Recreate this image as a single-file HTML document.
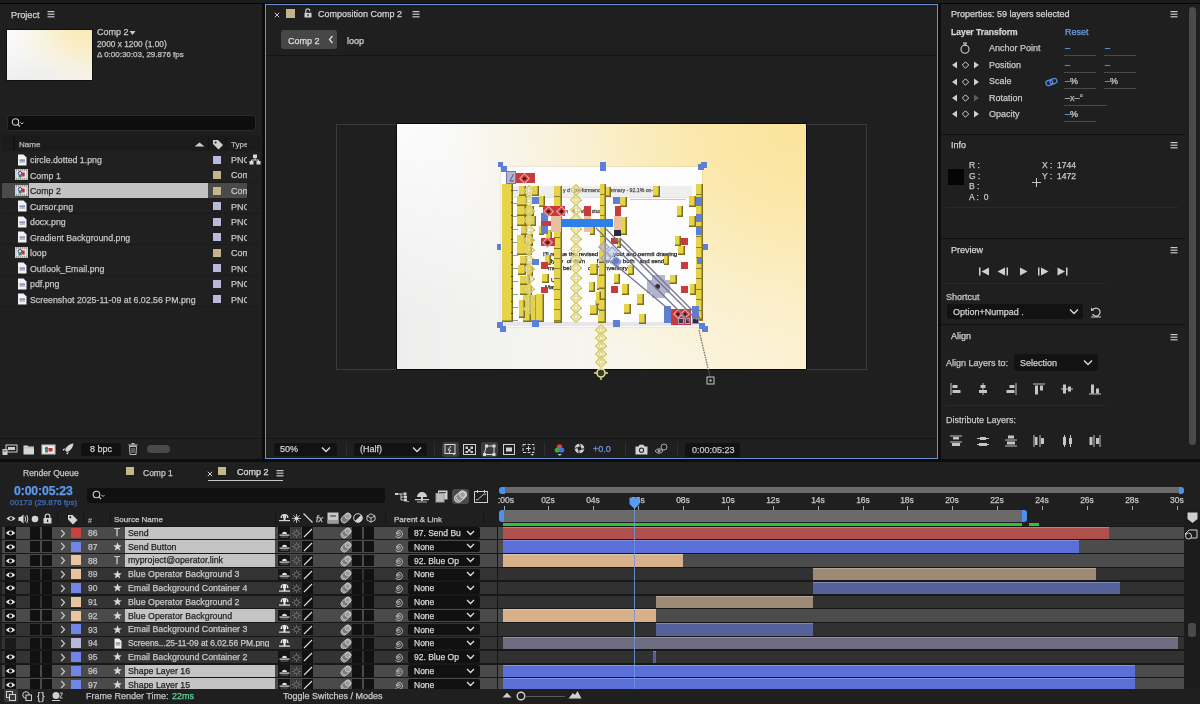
<!DOCTYPE html>
<html><head><meta charset="utf-8">
<style>
*{margin:0;padding:0;box-sizing:border-box}
html,body{width:1200px;height:704px;overflow:hidden;-webkit-font-smoothing:antialiased;background:#0c0c0c;font-family:"Liberation Sans",sans-serif;color:#c4c4c4;font-size:9px}
.a{position:absolute;display:block}
.t{position:absolute;white-space:nowrap;line-height:1;-webkit-text-stroke:0.25px currentColor;will-change:transform}
</style></head><body>

<div class="a" style="left:0px;top:0px;width:1200px;height:2.5px;background:#1b1b1b;"></div>
<div class="a" style="left:0px;top:2.5px;width:1200px;height:1.5px;background:#060606;"></div>
<div class="a" style="left:0px;top:4px;width:262px;height:455px;background:#1f1f1f;"></div>
<div class="t" style="left:11px;top:10.71px;font-size:9.2px;color:#d2d2d2;font-weight:normal;">Project</div>
<svg class="a" style="left:47px;top:11px;" width="8" height="7" viewBox="0 0 8 7"><rect x="0.5" y="0" width="7" height="1.2" fill="#c8c8c8"/><rect x="0.5" y="2.6" width="7" height="1.2" fill="#c8c8c8"/><rect x="0.5" y="5.2" width="7" height="1.2" fill="#c8c8c8"/></svg>
<div class="a" style="left:6px;top:29px;width:87px;height:52px;background:#111;"></div>
<div class="a" style="left:7px;top:30px;width:85px;height:50px;background:radial-gradient(ellipse 100% 120% at 100% 0%, #f8e9b4 0%, #f9eec8 35%, rgba(250,242,215,0.7) 60%, rgba(250,245,235,0) 92%), linear-gradient(165deg,#fbfbfb 0%,#f4f4f4 45%,#eeeeee 75%,#f5f3ee 100%);"></div>
<div class="t" style="left:97px;top:28.18px;font-size:9px;color:#c8c8c8;font-weight:normal;">Comp 2</div>
<svg class="a" style="left:129px;top:30px;" width="7" height="6" viewBox="0 0 7 6"><path d="M0.5 1 L6.5 1 L3.5 5 Z" fill="#c8c8c8"/></svg>
<div class="t" style="left:97px;top:39.67px;font-size:8.3px;color:#c4c4c4;font-weight:normal;">2000 x 1200 (1.00)</div>
<div class="t" style="left:97px;top:50.73px;font-size:8px;color:#c4c4c4;font-weight:normal;">&#916; 0:00:30:03, 29.876 fps</div>
<div class="a" style="left:7px;top:114.5px;width:249px;height:16px;background:#0e0e0e;border-radius:3px;border:1px solid #2a2a2a"></div>
<svg class="a" style="left:11px;top:118px;" width="16" height="10" viewBox="0 0 16 10"><circle cx="4.5" cy="4" r="3.2" fill="none" stroke="#cfcfcf" stroke-width="1.1"/><path d="M6.8 6.3 L9 8.6" stroke="#cfcfcf" stroke-width="1.2"/><path d="M9.5 4.5 L11 6 L12.5 4.5" fill="none" stroke="#cfcfcf" stroke-width="0.9"/></svg>
<div class="a" style="left:2px;top:135px;width:259px;height:16px;background:#1b1b1b;"></div>
<div class="a" style="left:13px;top:137px;width:2px;height:13px;background:#111;"></div>
<div class="t" style="left:19px;top:140.93px;font-size:8px;color:#b8b8b8;font-weight:normal;">Name</div>
<svg class="a" style="left:194px;top:142px;" width="12" height="5" viewBox="0 0 12 5"><path d="M0.5 4.5 L5.5 0.5 L10.5 4.5 Z" fill="#cfcfcf"/></svg>
<div class="a" style="left:208px;top:137px;width:1px;height:13px;background:#131313;"></div>
<svg class="a" style="left:212px;top:139px;" width="12" height="12" viewBox="0 0 12 12"><path d="M1 1 L6 1 L11 6 L6.5 10.5 L1 5 Z" fill="#d0d0d0"/><circle cx="3.6" cy="3.6" r="1" fill="#1b1b1b"/></svg>
<div class="a" style="left:225px;top:137px;width:1px;height:13px;background:#131313;"></div>
<div class="t" style="left:231px;top:140.93px;font-size:8px;color:#b8b8b8;font-weight:normal;width:16px;overflow:hidden">Type</div>
<div class="a" style="left:2px;top:152px;width:259px;height:15px;background:#202020;"></div>
<div class="a" style="left:2px;top:167px;width:259px;height:1px;background:#1a1a1a;"></div>
<svg class="a" style="left:17px;top:154px;" width="10" height="12" viewBox="0 0 10 12"><path d="M1 0.5 L6.5 0.5 L9.5 3.5 L9.5 11.5 L1 11.5 Z" fill="#f2f2f2"/><rect x="2.5" y="5.5" width="5.5" height="1.2" fill="#5b6eb0"/><rect x="2.5" y="7.5" width="5.5" height="1" fill="#8a8a8a"/></svg>
<div class="t" style="left:30px;top:156.05px;font-size:8.8px;color:#c4c4c4;font-weight:normal;">circle.dotted 1.png</div>
<div class="a" style="left:213px;top:156px;width:8px;height:8px;background:#b9b9dc;"></div>
<div class="t" style="left:231px;top:155.88px;font-size:9px;color:#c4c4c4;font-weight:normal;width:16px;overflow:hidden">PNG</div>
<div class="a" style="left:2px;top:167px;width:259px;height:15px;background:#202020;"></div>
<div class="a" style="left:2px;top:182px;width:259px;height:1px;background:#1a1a1a;"></div>
<svg class="a" style="left:15px;top:169px;" width="13" height="11" viewBox="0 0 13 11"><rect x="0" y="0" width="13" height="11" fill="#cfcfcf"/><path d="M1 1 H12 M1 10 H12" stroke="#555" stroke-width="0.8" stroke-dasharray="1 1"/><rect x="2" y="2" width="9" height="7" fill="#e8e8e8"/><circle cx="5" cy="4.3" r="1.8" fill="none" stroke="#2a4a8a" stroke-width="1"/><rect x="6.5" y="3.5" width="3.2" height="4" fill="#b03a3a"/><rect x="3.5" y="6" width="3" height="2.5" fill="#2a8a7a"/></svg>
<div class="t" style="left:30px;top:171.60px;font-size:8.8px;color:#c4c4c4;font-weight:normal;">Comp 1</div>
<div class="a" style="left:213px;top:171px;width:8px;height:8px;background:#c4b48c;"></div>
<div class="t" style="left:231px;top:171.43px;font-size:9px;color:#c4c4c4;font-weight:normal;width:16px;overflow:hidden">Com</div>
<div class="a" style="left:2px;top:183px;width:259px;height:15px;background:#202020;"></div>
<div class="a" style="left:2px;top:198px;width:259px;height:1px;background:#1a1a1a;"></div>
<div class="a" style="left:2px;top:183px;width:27px;height:15px;background:#4a4a4a;"></div>
<div class="a" style="left:29px;top:183px;width:179px;height:15px;background:#c2c2c2;"></div>
<div class="a" style="left:208px;top:183px;width:39px;height:15px;background:#4a4a4a;"></div>
<svg class="a" style="left:15px;top:185px;" width="13" height="11" viewBox="0 0 13 11"><rect x="0" y="0" width="13" height="11" fill="#cfcfcf"/><path d="M1 1 H12 M1 10 H12" stroke="#555" stroke-width="0.8" stroke-dasharray="1 1"/><rect x="2" y="2" width="9" height="7" fill="#e8e8e8"/><circle cx="5" cy="4.3" r="1.8" fill="none" stroke="#2a4a8a" stroke-width="1"/><rect x="6.5" y="3.5" width="3.2" height="4" fill="#b03a3a"/><rect x="3.5" y="6" width="3" height="2.5" fill="#2a8a7a"/></svg>
<div class="t" style="left:30px;top:187.15px;font-size:8.8px;color:#262626;font-weight:normal;">Comp 2</div>
<div class="a" style="left:213px;top:187px;width:8px;height:8px;background:#c4b48c;"></div>
<div class="t" style="left:231px;top:186.98px;font-size:9px;color:#c4c4c4;font-weight:normal;width:16px;overflow:hidden">Com</div>
<div class="a" style="left:2px;top:198px;width:259px;height:15px;background:#202020;"></div>
<div class="a" style="left:2px;top:213px;width:259px;height:1px;background:#1a1a1a;"></div>
<svg class="a" style="left:17px;top:200px;" width="10" height="12" viewBox="0 0 10 12"><path d="M1 0.5 L6.5 0.5 L9.5 3.5 L9.5 11.5 L1 11.5 Z" fill="#f2f2f2"/><rect x="2.5" y="5.5" width="5.5" height="1.2" fill="#5b6eb0"/><rect x="2.5" y="7.5" width="5.5" height="1" fill="#8a8a8a"/></svg>
<div class="t" style="left:30px;top:202.70px;font-size:8.8px;color:#c4c4c4;font-weight:normal;">Cursor.png</div>
<div class="a" style="left:213px;top:202px;width:8px;height:8px;background:#b9b9dc;"></div>
<div class="t" style="left:231px;top:202.53px;font-size:9px;color:#c4c4c4;font-weight:normal;width:16px;overflow:hidden">PNG</div>
<div class="a" style="left:2px;top:214px;width:259px;height:15px;background:#202020;"></div>
<div class="a" style="left:2px;top:229px;width:259px;height:1px;background:#1a1a1a;"></div>
<svg class="a" style="left:17px;top:216px;" width="10" height="12" viewBox="0 0 10 12"><path d="M1 0.5 L6.5 0.5 L9.5 3.5 L9.5 11.5 L1 11.5 Z" fill="#f2f2f2"/><rect x="2.5" y="5.5" width="5.5" height="1.2" fill="#5b6eb0"/><rect x="2.5" y="7.5" width="5.5" height="1" fill="#8a8a8a"/></svg>
<div class="t" style="left:30px;top:218.25px;font-size:8.8px;color:#c4c4c4;font-weight:normal;">docx.png</div>
<div class="a" style="left:213px;top:218px;width:8px;height:8px;background:#b9b9dc;"></div>
<div class="t" style="left:231px;top:218.08px;font-size:9px;color:#c4c4c4;font-weight:normal;width:16px;overflow:hidden">PNG</div>
<div class="a" style="left:2px;top:229px;width:259px;height:15px;background:#202020;"></div>
<div class="a" style="left:2px;top:244px;width:259px;height:1px;background:#1a1a1a;"></div>
<svg class="a" style="left:17px;top:231px;" width="10" height="12" viewBox="0 0 10 12"><path d="M1 0.5 L6.5 0.5 L9.5 3.5 L9.5 11.5 L1 11.5 Z" fill="#f2f2f2"/><rect x="2.5" y="5.5" width="5.5" height="1.2" fill="#5b6eb0"/><rect x="2.5" y="7.5" width="5.5" height="1" fill="#8a8a8a"/></svg>
<div class="t" style="left:30px;top:233.80px;font-size:8.8px;color:#c4c4c4;font-weight:normal;">Gradient Background.png</div>
<div class="a" style="left:213px;top:233px;width:8px;height:8px;background:#b9b9dc;"></div>
<div class="t" style="left:231px;top:233.63px;font-size:9px;color:#c4c4c4;font-weight:normal;width:16px;overflow:hidden">PNG</div>
<div class="a" style="left:2px;top:245px;width:259px;height:15px;background:#202020;"></div>
<div class="a" style="left:2px;top:260px;width:259px;height:1px;background:#1a1a1a;"></div>
<svg class="a" style="left:15px;top:247px;" width="13" height="11" viewBox="0 0 13 11"><rect x="0" y="0" width="13" height="11" fill="#cfcfcf"/><path d="M1 1 H12 M1 10 H12" stroke="#555" stroke-width="0.8" stroke-dasharray="1 1"/><rect x="2" y="2" width="9" height="7" fill="#e8e8e8"/><circle cx="5" cy="4.3" r="1.8" fill="none" stroke="#2a4a8a" stroke-width="1"/><rect x="6.5" y="3.5" width="3.2" height="4" fill="#b03a3a"/><rect x="3.5" y="6" width="3" height="2.5" fill="#2a8a7a"/></svg>
<div class="t" style="left:30px;top:249.35px;font-size:8.8px;color:#c4c4c4;font-weight:normal;">loop</div>
<div class="a" style="left:213px;top:249px;width:8px;height:8px;background:#c4b48c;"></div>
<div class="t" style="left:231px;top:249.18px;font-size:9px;color:#c4c4c4;font-weight:normal;width:16px;overflow:hidden">Com</div>
<div class="a" style="left:2px;top:260px;width:259px;height:15px;background:#202020;"></div>
<div class="a" style="left:2px;top:275px;width:259px;height:1px;background:#1a1a1a;"></div>
<svg class="a" style="left:17px;top:262px;" width="10" height="12" viewBox="0 0 10 12"><path d="M1 0.5 L6.5 0.5 L9.5 3.5 L9.5 11.5 L1 11.5 Z" fill="#f2f2f2"/><rect x="2.5" y="5.5" width="5.5" height="1.2" fill="#5b6eb0"/><rect x="2.5" y="7.5" width="5.5" height="1" fill="#8a8a8a"/></svg>
<div class="t" style="left:30px;top:264.90px;font-size:8.8px;color:#c4c4c4;font-weight:normal;">Outlook_Email.png</div>
<div class="a" style="left:213px;top:264px;width:8px;height:8px;background:#b9b9dc;"></div>
<div class="t" style="left:231px;top:264.73px;font-size:9px;color:#c4c4c4;font-weight:normal;width:16px;overflow:hidden">PNG</div>
<div class="a" style="left:2px;top:276px;width:259px;height:15px;background:#202020;"></div>
<div class="a" style="left:2px;top:291px;width:259px;height:1px;background:#1a1a1a;"></div>
<svg class="a" style="left:17px;top:278px;" width="10" height="12" viewBox="0 0 10 12"><path d="M1 0.5 L6.5 0.5 L9.5 3.5 L9.5 11.5 L1 11.5 Z" fill="#f2f2f2"/><rect x="2.5" y="5.5" width="5.5" height="1.2" fill="#5b6eb0"/><rect x="2.5" y="7.5" width="5.5" height="1" fill="#8a8a8a"/></svg>
<div class="t" style="left:30px;top:280.45px;font-size:8.8px;color:#c4c4c4;font-weight:normal;">pdf.png</div>
<div class="a" style="left:213px;top:280px;width:8px;height:8px;background:#b9b9dc;"></div>
<div class="t" style="left:231px;top:280.28px;font-size:9px;color:#c4c4c4;font-weight:normal;width:16px;overflow:hidden">PNG</div>
<div class="a" style="left:2px;top:291px;width:259px;height:15px;background:#202020;"></div>
<div class="a" style="left:2px;top:306px;width:259px;height:1px;background:#1a1a1a;"></div>
<svg class="a" style="left:17px;top:293px;" width="10" height="12" viewBox="0 0 10 12"><path d="M1 0.5 L6.5 0.5 L9.5 3.5 L9.5 11.5 L1 11.5 Z" fill="#f2f2f2"/><rect x="2.5" y="5.5" width="5.5" height="1.2" fill="#5b6eb0"/><rect x="2.5" y="7.5" width="5.5" height="1" fill="#8a8a8a"/></svg>
<div class="t" style="left:30px;top:296.00px;font-size:8.8px;color:#c4c4c4;font-weight:normal;">Screenshot 2025-11-09 at 6.02.56 PM.png</div>
<div class="a" style="left:213px;top:295px;width:8px;height:8px;background:#b9b9dc;"></div>
<div class="t" style="left:231px;top:295.83px;font-size:9px;color:#c4c4c4;font-weight:normal;width:16px;overflow:hidden">PNG</div>
<svg class="a" style="left:249px;top:154px;" width="12" height="11" viewBox="0 0 12 11"><rect x="4" y="0.5" width="4" height="3.5" fill="#d8d8d8"/><path d="M6 4 V6 M2.5 6 H9.5 M2.5 6 V7 M9.5 6 V7" stroke="#d8d8d8" stroke-width="1"/><rect x="0.5" y="7" width="4" height="3.5" fill="#d8d8d8"/><rect x="7.5" y="7" width="4" height="3.5" fill="#d8d8d8"/></svg>
<div class="a" style="left:0px;top:438px;width:262px;height:1px;background:#141414;"></div>
<svg class="a" style="left:2px;top:444px;" width="16" height="12" viewBox="0 0 16 12"><rect x="4" y="1" width="11" height="7" fill="none" stroke="#cfcfcf" stroke-width="1"/><rect x="6" y="3" width="7" height="3" fill="#cfcfcf"/><rect x="0.5" y="5" width="5" height="6" fill="#cfcfcf"/><rect x="1.5" y="6.5" width="3" height="0.8" fill="#1f1f1f"/></svg>
<svg class="a" style="left:23px;top:444px;" width="12" height="11" viewBox="0 0 12 11"><path d="M0.5 1.5 H4.5 L5.5 2.5 H11 V10.5 H0.5 Z" fill="#d6d6d6"/><rect x="0.5" y="3.5" width="10.5" height="0.7" fill="#aaa"/></svg>
<svg class="a" style="left:41px;top:444px;" width="15" height="11" viewBox="0 0 15 11"><rect x="0.5" y="0.5" width="14" height="10" fill="#cfcfcf"/><rect x="2" y="2" width="11" height="7" fill="#eee"/><circle cx="5.5" cy="4.5" r="1.8" fill="#3d6fb0"/><rect x="7.5" y="4" width="4" height="3.5" fill="#c03030"/><rect x="4" y="6" width="3" height="2.5" fill="#3a9a50"/></svg>
<svg class="a" style="left:62px;top:443px;" width="12" height="12" viewBox="0 0 12 12"><path d="M11.5 0.5 C7 1 4 4 3 7 L5 9 C8 8 11 5 11.5 0.5 Z" fill="#d6d6d6"/><path d="M3 5 L0.5 6.5 L2 8 Z M7 9 L5.5 11.5 L4 10 Z" fill="#d6d6d6"/></svg>
<div class="a" style="left:81px;top:443px;width:40px;height:13px;background:#111;border-radius:2px"></div>
<div class="t" style="left:89.5px;top:445.38px;font-size:9px;color:#d0d0d0;font-weight:normal;">8 bpc</div>
<svg class="a" style="left:128px;top:443px;" width="10" height="12" viewBox="0 0 10 12"><rect x="0.5" y="1.5" width="9" height="1.2" fill="#bbb"/><rect x="3.5" y="0" width="3" height="1.5" fill="#bbb"/><path d="M1.5 3.5 H8.5 L8 11.5 H2 Z" fill="none" stroke="#bbb" stroke-width="1"/><path d="M4 5 V10 M6 5 V10" stroke="#bbb" stroke-width="0.8"/></svg>
<div class="a" style="left:147px;top:445px;width:23px;height:8px;background:#4a4a4a;border-radius:4px"></div>
<div class="a" style="left:265px;top:4px;width:673px;height:455px;background:#1f1f1f;"></div>
<div class="a" style="left:265px;top:4px;width:673px;height:455px;border:1px solid #6d8fcf"></div>
<svg class="a" style="left:274px;top:12px;" width="6" height="6" viewBox="0 0 6 6"><path d="M0.8 0.8 L5.2 5.2 M5.2 0.8 L0.8 5.2" stroke="#c4c4c4" stroke-width="1"/></svg>
<div class="a" style="left:286px;top:9px;width:9px;height:9px;background:#c4b48c;"></div>
<svg class="a" style="left:304px;top:8px;" width="8" height="10" viewBox="0 0 8 10"><path d="M1.8 4.8 V2.8 A2 2 0 0 1 5.8 2.8 V3.2" fill="none" stroke="#d0d0d0" stroke-width="1.2"/><rect x="0.5" y="4.8" width="7" height="4.7" fill="#d0d0d0"/><rect x="3.4" y="6" width="1.2" height="2.2" fill="#1f1f1f"/></svg>
<div class="t" style="left:318px;top:10.38px;font-size:9px;color:#d2d2d2;font-weight:normal;">Composition Comp 2</div>
<svg class="a" style="left:412px;top:11px;" width="8" height="7" viewBox="0 0 8 7"><rect x="0.5" y="0" width="7" height="1.2" fill="#c8c8c8"/><rect x="0.5" y="2.6" width="7" height="1.2" fill="#c8c8c8"/><rect x="0.5" y="5.2" width="7" height="1.2" fill="#c8c8c8"/></svg>
<div class="a" style="left:281px;top:30px;width:56px;height:19px;background:#474747;border-radius:3px"></div>
<div class="t" style="left:288px;top:36.88px;font-size:9px;color:#dcdcdc;font-weight:normal;">Comp 2</div>
<svg class="a" style="left:328px;top:35px;" width="6" height="9" viewBox="0 0 6 9"><path d="M4.5 1 L1.5 4.5 L4.5 8" fill="none" stroke="#e0e0e0" stroke-width="1.3"/></svg>
<div class="t" style="left:347px;top:36.88px;font-size:9px;color:#cfcfcf;font-weight:normal;">loop</div>
<div class="a" style="left:266px;top:55px;width:671px;height:1px;background:#141414;"></div>
<div class="a" style="left:336px;top:124px;width:531px;height:245.5px;border:1px solid #3a3a3a"></div>
<div class="a" style="left:396px;top:123px;width:411px;height:247px;background:#0a0a0a"></div>
<div class="a" id="compbg" style="left:397px;top:124px;width:409px;height:245px;background:radial-gradient(ellipse 92% 118% at 100% 0%, rgba(252,227,154,1) 0%, rgba(251,231,168,0.92) 30%, rgba(251,236,190,0.55) 62%, rgba(251,240,210,0) 95%), radial-gradient(ellipse 60% 80% at 0% 0%, rgba(255,255,255,0.8) 0%, rgba(255,255,255,0) 100%), linear-gradient(90deg,#eeeeee 0%,#f3f3f1 30%,#f9f6ea 60%,#fcf3d6 100%);">
<div class="a" style="left:104.0px;top:43.0px;width:201.0px;height:160.0px;background:#fcfcfc;box-shadow:0 0 2px rgba(0,0,0,0.15)"></div><div class="a" style="left:113.0px;top:62.0px;width:182.0px;height:11.0px;background:#eeeeee;"></div><div class="a" style="left:107.0px;top:198.0px;width:196.0px;height:4.0px;background:#e6e6ea;"></div><div class="a" style="left:115.0px;top:73.0px;width:180.0px;height:1.0px;background:#e4e4e4;"></div><div class="t" style="left:166px;top:64px;font-size:5.2px;color:#555">y d&nbsp;&nbsp; performance&nbsp;&nbsp;&nbsp; mmary - 92.1% on-tim</div><div class="t" style="left:165px;top:85px;font-size:5.2px;color:#444">on&nbsp;&nbsp; 4&nbsp;&nbsp;&nbsp; vine stud</div><div class="t" style="left:146px;top:127px;font-size:6px;color:#222">I&#39;ll re&nbsp;&nbsp; ue the revised&nbsp;&nbsp;&nbsp;&nbsp;&nbsp;&nbsp;&nbsp;&nbsp; yout and permit drawing</div><div class="t" style="left:152px;top:134px;font-size:6px;color:#222">dy by&nbsp; of dam&nbsp;&nbsp;&nbsp;&nbsp;&nbsp;&nbsp; I&#39;ll review both&nbsp;&nbsp; and send</div><div class="t" style="left:151px;top:141px;font-size:6px;color:#222">mm&nbsp;&nbsp; bef&nbsp;&nbsp;&nbsp;&nbsp;&nbsp;&nbsp;&nbsp;&nbsp;&nbsp; day&#39;s inventory.</div><div class="t" style="left:154px;top:153px;font-size:6px;color:#222">Up</div><div class="t" style="left:148px;top:160px;font-size:6px;color:#222">May</div><div class="a" style="left:115.0px;top:66.0px;width:6.0px;height:1.0px;background:#9a9a9a;"></div><div class="a" style="left:115.0px;top:79.0px;width:6.0px;height:1.0px;background:#9a9a9a;"></div><div class="a" style="left:115.0px;top:92.0px;width:6.0px;height:1.0px;background:#9a9a9a;"></div><div class="a" style="left:115.0px;top:105.0px;width:6.0px;height:1.0px;background:#9a9a9a;"></div><div class="a" style="left:115.0px;top:118.0px;width:6.0px;height:1.0px;background:#9a9a9a;"></div><div class="a" style="left:115.0px;top:131.0px;width:6.0px;height:1.0px;background:#9a9a9a;"></div><div class="a" style="left:115.0px;top:144.0px;width:6.0px;height:1.0px;background:#9a9a9a;"></div><div class="a" style="left:115.0px;top:157.0px;width:6.0px;height:1.0px;background:#9a9a9a;"></div><div class="a" style="left:115.0px;top:170.0px;width:6.0px;height:1.0px;background:#9a9a9a;"></div><div class="a" style="left:115.0px;top:183.0px;width:6.0px;height:1.0px;background:#9a9a9a;"></div><div class="a" style="left:115.0px;top:196.0px;width:6.0px;height:1.0px;background:#9a9a9a;"></div><div class="a" style="left:233.0px;top:75.0px;width:56.0px;height:0.6px;background:#c8c8c8;"></div><div class="a" style="left:105.0px;top:60.0px;width:10.5px;height:138.0px;background:#e6d348;box-shadow:inset -1.5px -1.5px 0 #7a6f22"></div><div class="a" style="left:113.5px;top:66.0px;width:2.5px;height:1.0px;background:#4a4620;"></div><div class="a" style="left:113.5px;top:78.3px;width:2.5px;height:1.0px;background:#4a4620;"></div><div class="a" style="left:113.5px;top:90.6px;width:2.5px;height:1.0px;background:#4a4620;"></div><div class="a" style="left:113.5px;top:102.9px;width:2.5px;height:1.0px;background:#4a4620;"></div><div class="a" style="left:113.5px;top:115.2px;width:2.5px;height:1.0px;background:#4a4620;"></div><div class="a" style="left:113.5px;top:127.5px;width:2.5px;height:1.0px;background:#4a4620;"></div><div class="a" style="left:113.5px;top:139.8px;width:2.5px;height:1.0px;background:#4a4620;"></div><div class="a" style="left:113.5px;top:152.1px;width:2.5px;height:1.0px;background:#4a4620;"></div><div class="a" style="left:113.5px;top:164.4px;width:2.5px;height:1.0px;background:#4a4620;"></div><div class="a" style="left:113.5px;top:176.7px;width:2.5px;height:1.0px;background:#4a4620;"></div><div class="a" style="left:113.5px;top:189.0px;width:2.5px;height:1.0px;background:#4a4620;"></div><div class="a" style="left:299.0px;top:60.0px;width:6.5px;height:136.0px;background:#e6d348;box-shadow:inset -1.5px -1.5px 0 #7a6f22"></div><div class="a" style="left:157.0px;top:62.0px;width:7.5px;height:137.0px;background:#e6d348;box-shadow:inset -1.5px -1.5px 0 #7a6f22"></div><div class="a" style="left:203.0px;top:60.0px;width:5.5px;height:64.0px;background:#e6d348;box-shadow:inset -1.5px -1.5px 0 #7a6f22"></div><div class="a" style="left:157.0px;top:72.0px;width:7.5px;height:1.0px;background:#8a7e2a;"></div><div class="a" style="left:157.0px;top:82.3px;width:7.5px;height:1.0px;background:#8a7e2a;"></div><div class="a" style="left:157.0px;top:92.6px;width:7.5px;height:1.0px;background:#8a7e2a;"></div><div class="a" style="left:157.0px;top:102.9px;width:7.5px;height:1.0px;background:#8a7e2a;"></div><div class="a" style="left:157.0px;top:113.2px;width:7.5px;height:1.0px;background:#8a7e2a;"></div><div class="a" style="left:157.0px;top:123.5px;width:7.5px;height:1.0px;background:#8a7e2a;"></div><div class="a" style="left:157.0px;top:133.8px;width:7.5px;height:1.0px;background:#8a7e2a;"></div><div class="a" style="left:157.0px;top:144.1px;width:7.5px;height:1.0px;background:#8a7e2a;"></div><div class="a" style="left:157.0px;top:154.4px;width:7.5px;height:1.0px;background:#8a7e2a;"></div><div class="a" style="left:157.0px;top:164.7px;width:7.5px;height:1.0px;background:#8a7e2a;"></div><div class="a" style="left:157.0px;top:175.0px;width:7.5px;height:1.0px;background:#8a7e2a;"></div><div class="a" style="left:157.0px;top:185.3px;width:7.5px;height:1.0px;background:#8a7e2a;"></div><div class="a" style="left:157.0px;top:195.6px;width:7.5px;height:1.0px;background:#8a7e2a;"></div><div class="a" style="left:299.0px;top:70.0px;width:6.5px;height:1.0px;background:#8a7e2a;"></div><div class="a" style="left:299.0px;top:80.5px;width:6.5px;height:1.0px;background:#8a7e2a;"></div><div class="a" style="left:299.0px;top:91.0px;width:6.5px;height:1.0px;background:#8a7e2a;"></div><div class="a" style="left:299.0px;top:101.5px;width:6.5px;height:1.0px;background:#8a7e2a;"></div><div class="a" style="left:299.0px;top:112.0px;width:6.5px;height:1.0px;background:#8a7e2a;"></div><div class="a" style="left:299.0px;top:122.5px;width:6.5px;height:1.0px;background:#8a7e2a;"></div><div class="a" style="left:299.0px;top:133.0px;width:6.5px;height:1.0px;background:#8a7e2a;"></div><div class="a" style="left:299.0px;top:143.5px;width:6.5px;height:1.0px;background:#8a7e2a;"></div><div class="a" style="left:299.0px;top:154.0px;width:6.5px;height:1.0px;background:#8a7e2a;"></div><div class="a" style="left:299.0px;top:164.5px;width:6.5px;height:1.0px;background:#8a7e2a;"></div><div class="a" style="left:299.0px;top:175.0px;width:6.5px;height:1.0px;background:#8a7e2a;"></div><div class="a" style="left:299.0px;top:185.5px;width:6.5px;height:1.0px;background:#8a7e2a;"></div><div class="a" style="left:299.0px;top:196.0px;width:6.5px;height:1.0px;background:#8a7e2a;"></div><div class="a" style="left:203.0px;top:70.0px;width:5.5px;height:1.0px;background:#8a7e2a;"></div><div class="a" style="left:203.0px;top:80.5px;width:5.5px;height:1.0px;background:#8a7e2a;"></div><div class="a" style="left:203.0px;top:91.0px;width:5.5px;height:1.0px;background:#8a7e2a;"></div><div class="a" style="left:203.0px;top:101.5px;width:5.5px;height:1.0px;background:#8a7e2a;"></div><div class="a" style="left:203.0px;top:112.0px;width:5.5px;height:1.0px;background:#8a7e2a;"></div><div class="a" style="left:203.0px;top:122.5px;width:5.5px;height:1.0px;background:#8a7e2a;"></div><div class="a" style="left:121.7px;top:62.0px;width:7.0px;height:10.4px;background:#e6d348;box-shadow:inset -1.5px -1.5px 0 #7a6f22"></div><div class="a" style="left:135.0px;top:62.0px;width:6.5px;height:10.4px;background:#e6d348;box-shadow:inset -1.5px -1.5px 0 #7a6f22"></div><div class="a" style="left:119.7px;top:72.0px;width:10.3px;height:10.0px;background:#e6d348;box-shadow:inset -1.5px -1.5px 0 #7a6f22"></div><div class="a" style="left:119.7px;top:82.0px;width:9.0px;height:9.5px;background:#e6d348;box-shadow:inset -1.5px -1.5px 0 #7a6f22"></div><div class="a" style="left:129.0px;top:82.0px;width:8.0px;height:10.0px;background:#e6d348;box-shadow:inset -1.5px -1.5px 0 #7a6f22"></div><div class="a" style="left:120.4px;top:91.5px;width:8.9px;height:10.3px;background:#e6d348;box-shadow:inset -1.5px -1.5px 0 #7a6f22"></div><div class="a" style="left:129.3px;top:91.5px;width:9.7px;height:10.3px;background:#e6d348;box-shadow:inset -1.5px -1.5px 0 #7a6f22"></div><div class="a" style="left:123.6px;top:101.8px;width:6.4px;height:8.9px;background:#e6d348;box-shadow:inset -1.5px -1.5px 0 #7a6f22"></div><div class="a" style="left:119.7px;top:110.7px;width:9.0px;height:12.8px;background:#e6d348;box-shadow:inset -1.5px -1.5px 0 #7a6f22"></div><div class="a" style="left:130.0px;top:110.0px;width:6.0px;height:12.0px;background:#e6d348;box-shadow:inset -1.5px -1.5px 0 #7a6f22"></div><div class="a" style="left:120.0px;top:119.0px;width:15.0px;height:12.0px;background:#e6d348;box-shadow:inset -1.5px -1.5px 0 #7a6f22"></div><div class="a" style="left:123.0px;top:132.0px;width:7.0px;height:9.0px;background:#e6d348;box-shadow:inset -1.5px -1.5px 0 #7a6f22"></div><div class="a" style="left:121.0px;top:141.0px;width:8.0px;height:10.0px;background:#e6d348;box-shadow:inset -1.5px -1.5px 0 #7a6f22"></div><div class="a" style="left:130.0px;top:142.0px;width:6.0px;height:10.0px;background:#e6d348;box-shadow:inset -1.5px -1.5px 0 #7a6f22"></div><div class="a" style="left:123.0px;top:152.0px;width:10.0px;height:9.0px;background:#e6d348;box-shadow:inset -1.5px -1.5px 0 #7a6f22"></div><div class="a" style="left:123.0px;top:161.0px;width:12.0px;height:10.0px;background:#e6d348;box-shadow:inset -1.5px -1.5px 0 #7a6f22"></div><div class="a" style="left:126.0px;top:171.0px;width:8.0px;height:27.0px;background:#e6d348;box-shadow:inset -1.5px -1.5px 0 #7a6f22"></div><div class="a" style="left:134.0px;top:171.0px;width:6.0px;height:27.0px;background:#e6d348;box-shadow:inset -1.5px -1.5px 0 #7a6f22"></div><div class="a" style="left:139.0px;top:170.0px;width:8.0px;height:28.0px;background:#e6d348;box-shadow:inset -1.5px -1.5px 0 #7a6f22"></div><div class="a" style="left:122.0px;top:176.0px;width:6.0px;height:18.0px;background:#e6d348;box-shadow:inset -1.5px -1.5px 0 #7a6f22"></div><svg class="a" style="left:126.0px;top:61.0px" width="12" height="12" viewBox="0 0 12 12"><path d="M6 0.7 L11.3 6 L6 11.3 L0.7 6 Z" fill="rgba(245,240,200,0.35)" stroke="#d6cc66" stroke-width="1.5"/><circle cx="6" cy="6" r="2.1" fill="none" stroke="#cfc468" stroke-width="0.9"/><path d="M10.5 6.5 H12" stroke="#bdb45a" stroke-width="1"/></svg><svg class="a" style="left:126.0px;top:70.8px" width="12" height="12" viewBox="0 0 12 12"><path d="M6 0.7 L11.3 6 L6 11.3 L0.7 6 Z" fill="rgba(245,240,200,0.35)" stroke="#d6cc66" stroke-width="1.5"/><circle cx="6" cy="6" r="2.1" fill="none" stroke="#cfc468" stroke-width="0.9"/><path d="M10.5 6.5 H12" stroke="#bdb45a" stroke-width="1"/></svg><svg class="a" style="left:126.0px;top:80.6px" width="12" height="12" viewBox="0 0 12 12"><path d="M6 0.7 L11.3 6 L6 11.3 L0.7 6 Z" fill="rgba(245,240,200,0.35)" stroke="#d6cc66" stroke-width="1.5"/><circle cx="6" cy="6" r="2.1" fill="none" stroke="#cfc468" stroke-width="0.9"/><path d="M10.5 6.5 H12" stroke="#bdb45a" stroke-width="1"/></svg><svg class="a" style="left:126.0px;top:90.4px" width="12" height="12" viewBox="0 0 12 12"><path d="M6 0.7 L11.3 6 L6 11.3 L0.7 6 Z" fill="rgba(245,240,200,0.35)" stroke="#d6cc66" stroke-width="1.5"/><circle cx="6" cy="6" r="2.1" fill="none" stroke="#cfc468" stroke-width="0.9"/><path d="M10.5 6.5 H12" stroke="#bdb45a" stroke-width="1"/></svg><svg class="a" style="left:126.0px;top:100.2px" width="12" height="12" viewBox="0 0 12 12"><path d="M6 0.7 L11.3 6 L6 11.3 L0.7 6 Z" fill="rgba(245,240,200,0.35)" stroke="#d6cc66" stroke-width="1.5"/><circle cx="6" cy="6" r="2.1" fill="none" stroke="#cfc468" stroke-width="0.9"/><path d="M10.5 6.5 H12" stroke="#bdb45a" stroke-width="1"/></svg><svg class="a" style="left:126.0px;top:110.0px" width="12" height="12" viewBox="0 0 12 12"><path d="M6 0.7 L11.3 6 L6 11.3 L0.7 6 Z" fill="rgba(245,240,200,0.35)" stroke="#d6cc66" stroke-width="1.5"/><circle cx="6" cy="6" r="2.1" fill="none" stroke="#cfc468" stroke-width="0.9"/><path d="M10.5 6.5 H12" stroke="#bdb45a" stroke-width="1"/></svg><svg class="a" style="left:126.0px;top:119.8px" width="12" height="12" viewBox="0 0 12 12"><path d="M6 0.7 L11.3 6 L6 11.3 L0.7 6 Z" fill="rgba(245,240,200,0.35)" stroke="#d6cc66" stroke-width="1.5"/><circle cx="6" cy="6" r="2.1" fill="none" stroke="#cfc468" stroke-width="0.9"/><path d="M10.5 6.5 H12" stroke="#bdb45a" stroke-width="1"/></svg><svg class="a" style="left:126.0px;top:129.6px" width="12" height="12" viewBox="0 0 12 12"><path d="M6 0.7 L11.3 6 L6 11.3 L0.7 6 Z" fill="rgba(245,240,200,0.35)" stroke="#d6cc66" stroke-width="1.5"/><circle cx="6" cy="6" r="2.1" fill="none" stroke="#cfc468" stroke-width="0.9"/><path d="M10.5 6.5 H12" stroke="#bdb45a" stroke-width="1"/></svg><svg class="a" style="left:126.0px;top:139.4px" width="12" height="12" viewBox="0 0 12 12"><path d="M6 0.7 L11.3 6 L6 11.3 L0.7 6 Z" fill="rgba(245,240,200,0.35)" stroke="#d6cc66" stroke-width="1.5"/><circle cx="6" cy="6" r="2.1" fill="none" stroke="#cfc468" stroke-width="0.9"/><path d="M10.5 6.5 H12" stroke="#bdb45a" stroke-width="1"/></svg><svg class="a" style="left:126.0px;top:149.2px" width="12" height="12" viewBox="0 0 12 12"><path d="M6 0.7 L11.3 6 L6 11.3 L0.7 6 Z" fill="rgba(245,240,200,0.35)" stroke="#d6cc66" stroke-width="1.5"/><circle cx="6" cy="6" r="2.1" fill="none" stroke="#cfc468" stroke-width="0.9"/><path d="M10.5 6.5 H12" stroke="#bdb45a" stroke-width="1"/></svg><svg class="a" style="left:126.0px;top:159.0px" width="12" height="12" viewBox="0 0 12 12"><path d="M6 0.7 L11.3 6 L6 11.3 L0.7 6 Z" fill="rgba(245,240,200,0.35)" stroke="#d6cc66" stroke-width="1.5"/><circle cx="6" cy="6" r="2.1" fill="none" stroke="#cfc468" stroke-width="0.9"/><path d="M10.5 6.5 H12" stroke="#bdb45a" stroke-width="1"/></svg><svg class="a" style="left:126.0px;top:168.8px" width="12" height="12" viewBox="0 0 12 12"><path d="M6 0.7 L11.3 6 L6 11.3 L0.7 6 Z" fill="rgba(245,240,200,0.35)" stroke="#d6cc66" stroke-width="1.5"/><circle cx="6" cy="6" r="2.1" fill="none" stroke="#cfc468" stroke-width="0.9"/><path d="M10.5 6.5 H12" stroke="#bdb45a" stroke-width="1"/></svg><svg class="a" style="left:126.0px;top:178.6px" width="12" height="12" viewBox="0 0 12 12"><path d="M6 0.7 L11.3 6 L6 11.3 L0.7 6 Z" fill="rgba(245,240,200,0.35)" stroke="#d6cc66" stroke-width="1.5"/><circle cx="6" cy="6" r="2.1" fill="none" stroke="#cfc468" stroke-width="0.9"/><path d="M10.5 6.5 H12" stroke="#bdb45a" stroke-width="1"/></svg><svg class="a" style="left:173.0px;top:60.0px" width="12" height="12" viewBox="0 0 12 12"><path d="M6 0.7 L11.3 6 L6 11.3 L0.7 6 Z" fill="rgba(245,240,200,0.35)" stroke="#d6cc66" stroke-width="1.5"/><circle cx="6" cy="6" r="2.1" fill="none" stroke="#cfc468" stroke-width="0.9"/><path d="M10.5 6.5 H12" stroke="#bdb45a" stroke-width="1"/></svg><svg class="a" style="left:173.0px;top:69.8px" width="12" height="12" viewBox="0 0 12 12"><path d="M6 0.7 L11.3 6 L6 11.3 L0.7 6 Z" fill="rgba(245,240,200,0.35)" stroke="#d6cc66" stroke-width="1.5"/><circle cx="6" cy="6" r="2.1" fill="none" stroke="#cfc468" stroke-width="0.9"/><path d="M10.5 6.5 H12" stroke="#bdb45a" stroke-width="1"/></svg><svg class="a" style="left:173.0px;top:79.6px" width="12" height="12" viewBox="0 0 12 12"><path d="M6 0.7 L11.3 6 L6 11.3 L0.7 6 Z" fill="rgba(245,240,200,0.35)" stroke="#d6cc66" stroke-width="1.5"/><circle cx="6" cy="6" r="2.1" fill="none" stroke="#cfc468" stroke-width="0.9"/><path d="M10.5 6.5 H12" stroke="#bdb45a" stroke-width="1"/></svg><svg class="a" style="left:173.0px;top:89.4px" width="12" height="12" viewBox="0 0 12 12"><path d="M6 0.7 L11.3 6 L6 11.3 L0.7 6 Z" fill="rgba(245,240,200,0.35)" stroke="#d6cc66" stroke-width="1.5"/><circle cx="6" cy="6" r="2.1" fill="none" stroke="#cfc468" stroke-width="0.9"/><path d="M10.5 6.5 H12" stroke="#bdb45a" stroke-width="1"/></svg><svg class="a" style="left:173.0px;top:99.2px" width="12" height="12" viewBox="0 0 12 12"><path d="M6 0.7 L11.3 6 L6 11.3 L0.7 6 Z" fill="rgba(245,240,200,0.35)" stroke="#d6cc66" stroke-width="1.5"/><circle cx="6" cy="6" r="2.1" fill="none" stroke="#cfc468" stroke-width="0.9"/><path d="M10.5 6.5 H12" stroke="#bdb45a" stroke-width="1"/></svg><svg class="a" style="left:173.0px;top:109.0px" width="12" height="12" viewBox="0 0 12 12"><path d="M6 0.7 L11.3 6 L6 11.3 L0.7 6 Z" fill="rgba(245,240,200,0.35)" stroke="#d6cc66" stroke-width="1.5"/><circle cx="6" cy="6" r="2.1" fill="none" stroke="#cfc468" stroke-width="0.9"/><path d="M10.5 6.5 H12" stroke="#bdb45a" stroke-width="1"/></svg><svg class="a" style="left:173.0px;top:118.8px" width="12" height="12" viewBox="0 0 12 12"><path d="M6 0.7 L11.3 6 L6 11.3 L0.7 6 Z" fill="rgba(245,240,200,0.35)" stroke="#d6cc66" stroke-width="1.5"/><circle cx="6" cy="6" r="2.1" fill="none" stroke="#cfc468" stroke-width="0.9"/><path d="M10.5 6.5 H12" stroke="#bdb45a" stroke-width="1"/></svg><svg class="a" style="left:173.0px;top:128.6px" width="12" height="12" viewBox="0 0 12 12"><path d="M6 0.7 L11.3 6 L6 11.3 L0.7 6 Z" fill="rgba(245,240,200,0.35)" stroke="#d6cc66" stroke-width="1.5"/><circle cx="6" cy="6" r="2.1" fill="none" stroke="#cfc468" stroke-width="0.9"/><path d="M10.5 6.5 H12" stroke="#bdb45a" stroke-width="1"/></svg><svg class="a" style="left:173.0px;top:138.4px" width="12" height="12" viewBox="0 0 12 12"><path d="M6 0.7 L11.3 6 L6 11.3 L0.7 6 Z" fill="rgba(245,240,200,0.35)" stroke="#d6cc66" stroke-width="1.5"/><circle cx="6" cy="6" r="2.1" fill="none" stroke="#cfc468" stroke-width="0.9"/><path d="M10.5 6.5 H12" stroke="#bdb45a" stroke-width="1"/></svg><svg class="a" style="left:173.0px;top:148.2px" width="12" height="12" viewBox="0 0 12 12"><path d="M6 0.7 L11.3 6 L6 11.3 L0.7 6 Z" fill="rgba(245,240,200,0.35)" stroke="#d6cc66" stroke-width="1.5"/><circle cx="6" cy="6" r="2.1" fill="none" stroke="#cfc468" stroke-width="0.9"/><path d="M10.5 6.5 H12" stroke="#bdb45a" stroke-width="1"/></svg><svg class="a" style="left:173.0px;top:158.0px" width="12" height="12" viewBox="0 0 12 12"><path d="M6 0.7 L11.3 6 L6 11.3 L0.7 6 Z" fill="rgba(245,240,200,0.35)" stroke="#d6cc66" stroke-width="1.5"/><circle cx="6" cy="6" r="2.1" fill="none" stroke="#cfc468" stroke-width="0.9"/><path d="M10.5 6.5 H12" stroke="#bdb45a" stroke-width="1"/></svg><svg class="a" style="left:173.0px;top:167.8px" width="12" height="12" viewBox="0 0 12 12"><path d="M6 0.7 L11.3 6 L6 11.3 L0.7 6 Z" fill="rgba(245,240,200,0.35)" stroke="#d6cc66" stroke-width="1.5"/><circle cx="6" cy="6" r="2.1" fill="none" stroke="#cfc468" stroke-width="0.9"/><path d="M10.5 6.5 H12" stroke="#bdb45a" stroke-width="1"/></svg><svg class="a" style="left:173.0px;top:177.6px" width="12" height="12" viewBox="0 0 12 12"><path d="M6 0.7 L11.3 6 L6 11.3 L0.7 6 Z" fill="rgba(245,240,200,0.35)" stroke="#d6cc66" stroke-width="1.5"/><circle cx="6" cy="6" r="2.1" fill="none" stroke="#cfc468" stroke-width="0.9"/><path d="M10.5 6.5 H12" stroke="#bdb45a" stroke-width="1"/></svg><svg class="a" style="left:173.0px;top:187.4px" width="12" height="12" viewBox="0 0 12 12"><path d="M6 0.7 L11.3 6 L6 11.3 L0.7 6 Z" fill="rgba(245,240,200,0.35)" stroke="#d6cc66" stroke-width="1.5"/><circle cx="6" cy="6" r="2.1" fill="none" stroke="#cfc468" stroke-width="0.9"/><path d="M10.5 6.5 H12" stroke="#bdb45a" stroke-width="1"/></svg><svg class="a" style="left:198.0px;top:200.0px" width="12" height="12" viewBox="0 0 12 12"><path d="M6 0.7 L11.3 6 L6 11.3 L0.7 6 Z" fill="rgba(245,240,200,0.35)" stroke="#d6cc66" stroke-width="1.5"/><circle cx="6" cy="6" r="2.1" fill="none" stroke="#cfc468" stroke-width="0.9"/><path d="M10.5 6.5 H12" stroke="#bdb45a" stroke-width="1"/></svg><svg class="a" style="left:198.0px;top:208.0px" width="12" height="12" viewBox="0 0 12 12"><path d="M6 0.7 L11.3 6 L6 11.3 L0.7 6 Z" fill="rgba(245,240,200,0.35)" stroke="#d6cc66" stroke-width="1.5"/><circle cx="6" cy="6" r="2.1" fill="none" stroke="#cfc468" stroke-width="0.9"/><path d="M10.5 6.5 H12" stroke="#bdb45a" stroke-width="1"/></svg><svg class="a" style="left:198.0px;top:216.0px" width="12" height="12" viewBox="0 0 12 12"><path d="M6 0.7 L11.3 6 L6 11.3 L0.7 6 Z" fill="rgba(245,240,200,0.35)" stroke="#d6cc66" stroke-width="1.5"/><circle cx="6" cy="6" r="2.1" fill="none" stroke="#cfc468" stroke-width="0.9"/><path d="M10.5 6.5 H12" stroke="#bdb45a" stroke-width="1"/></svg><svg class="a" style="left:198.0px;top:224.0px" width="12" height="12" viewBox="0 0 12 12"><path d="M6 0.7 L11.3 6 L6 11.3 L0.7 6 Z" fill="rgba(245,240,200,0.35)" stroke="#d6cc66" stroke-width="1.5"/><circle cx="6" cy="6" r="2.1" fill="none" stroke="#cfc468" stroke-width="0.9"/><path d="M10.5 6.5 H12" stroke="#bdb45a" stroke-width="1"/></svg><svg class="a" style="left:198.0px;top:232.0px" width="12" height="12" viewBox="0 0 12 12"><path d="M6 0.7 L11.3 6 L6 11.3 L0.7 6 Z" fill="rgba(245,240,200,0.35)" stroke="#d6cc66" stroke-width="1.5"/><circle cx="6" cy="6" r="2.1" fill="none" stroke="#cfc468" stroke-width="0.9"/><path d="M10.5 6.5 H12" stroke="#bdb45a" stroke-width="1"/></svg><div class="a" style="left:141.5px;top:72.0px;width:6.5px;height:11.0px;background:#e6d348;box-shadow:inset -1.5px -1.5px 0 #7a6f22"></div><div class="a" style="left:148.0px;top:131.0px;width:6.0px;height:10.0px;background:#e6d348;box-shadow:inset -1.5px -1.5px 0 #7a6f22"></div><div class="a" style="left:145.0px;top:150.0px;width:7.0px;height:9.0px;background:#e6d348;box-shadow:inset -1.5px -1.5px 0 #7a6f22"></div><div class="a" style="left:141.5px;top:102.0px;width:5.5px;height:9.0px;background:#e6d348;box-shadow:inset -1.5px -1.5px 0 #7a6f22"></div><div class="a" style="left:149.0px;top:106.0px;width:6.0px;height:10.0px;background:#e6d348;box-shadow:inset -1.5px -1.5px 0 #7a6f22"></div><div class="a" style="left:209.0px;top:63.0px;width:5.0px;height:10.0px;background:#e6d348;box-shadow:inset -1.5px -1.5px 0 #7a6f22"></div><div class="a" style="left:256.0px;top:62.0px;width:6.5px;height:11.0px;background:#e6d348;box-shadow:inset -1.5px -1.5px 0 #7a6f22"></div><div class="a" style="left:292.0px;top:72.0px;width:7.0px;height:11.0px;background:#e6d348;box-shadow:inset -1.5px -1.5px 0 #7a6f22"></div><div class="a" style="left:292.0px;top:92.0px;width:7.0px;height:11.0px;background:#e6d348;box-shadow:inset -1.5px -1.5px 0 #7a6f22"></div><div class="a" style="left:280.0px;top:82.0px;width:6.0px;height:11.0px;background:#e6d348;box-shadow:inset -1.5px -1.5px 0 #7a6f22"></div><div class="a" style="left:223.0px;top:73.0px;width:7.0px;height:10.0px;background:#e6d348;box-shadow:inset -1.5px -1.5px 0 #7a6f22"></div><div class="a" style="left:224.0px;top:93.0px;width:6.0px;height:18.0px;background:#e6d348;box-shadow:inset -1.5px -1.5px 0 #7a6f22"></div><div class="a" style="left:220.0px;top:114.0px;width:4.0px;height:10.0px;background:#e6d348;box-shadow:inset -1.5px -1.5px 0 #7a6f22"></div><div class="a" style="left:278.0px;top:112.0px;width:6.0px;height:10.0px;background:#e6d348;box-shadow:inset -1.5px -1.5px 0 #7a6f22"></div><div class="a" style="left:281.0px;top:122.0px;width:7.0px;height:9.0px;background:#e6d348;box-shadow:inset -1.5px -1.5px 0 #7a6f22"></div><div class="a" style="left:266.5px;top:132.0px;width:5.5px;height:9.0px;background:#e6d348;box-shadow:inset -1.5px -1.5px 0 #7a6f22"></div><div class="a" style="left:273.0px;top:151.0px;width:7.0px;height:9.0px;background:#e6d348;box-shadow:inset -1.5px -1.5px 0 #7a6f22"></div><div class="a" style="left:293.0px;top:160.0px;width:6.0px;height:11.0px;background:#e6d348;box-shadow:inset -1.5px -1.5px 0 #7a6f22"></div><div class="a" style="left:217.0px;top:150.0px;width:6.0px;height:10.0px;background:#e6d348;box-shadow:inset -1.5px -1.5px 0 #7a6f22"></div><div class="a" style="left:225.0px;top:160.0px;width:7.0px;height:11.0px;background:#e6d348;box-shadow:inset -1.5px -1.5px 0 #7a6f22"></div><div class="a" style="left:240.0px;top:170.0px;width:7.0px;height:11.0px;background:#e6d348;box-shadow:inset -1.5px -1.5px 0 #7a6f22"></div><div class="a" style="left:227.0px;top:180.0px;width:7.0px;height:10.0px;background:#e6d348;box-shadow:inset -1.5px -1.5px 0 #7a6f22"></div><div class="a" style="left:242.0px;top:190.0px;width:7.0px;height:10.0px;background:#e6d348;box-shadow:inset -1.5px -1.5px 0 #7a6f22"></div><div class="a" style="left:231.0px;top:141.0px;width:6.0px;height:10.0px;background:#e6d348;box-shadow:inset -1.5px -1.5px 0 #7a6f22"></div><div class="a" style="left:193.0px;top:141.0px;width:7.0px;height:9.0px;background:#e6d348;box-shadow:inset -1.5px -1.5px 0 #7a6f22"></div><div class="a" style="left:200.0px;top:151.0px;width:8.0px;height:15.0px;background:#e6d348;box-shadow:inset -1.5px -1.5px 0 #7a6f22"></div><div class="a" style="left:198.0px;top:176.0px;width:10.0px;height:10.0px;background:#e6d348;box-shadow:inset -1.5px -1.5px 0 #7a6f22"></div><div class="a" style="left:193.0px;top:181.0px;width:8.0px;height:10.0px;background:#e6d348;box-shadow:inset -1.5px -1.5px 0 #7a6f22"></div><div class="a" style="left:193.0px;top:102.0px;width:5.0px;height:9.0px;background:#e6d348;box-shadow:inset -1.5px -1.5px 0 #7a6f22"></div><div class="a" style="left:203.0px;top:119.0px;width:6.0px;height:12.0px;background:#e6d348;box-shadow:inset -1.5px -1.5px 0 #7a6f22"></div><div class="a" style="left:201.0px;top:191.0px;width:8.0px;height:8.0px;background:#e6d348;box-shadow:inset -1.5px -1.5px 0 #7a6f22"></div><div class="a" style="left:192.0px;top:158.0px;width:6.0px;height:10.0px;background:#e6d348;box-shadow:inset -1.5px -1.5px 0 #7a6f22"></div><div class="a" style="left:202.0px;top:126.0px;width:7.0px;height:13.0px;background:#e6d348;box-shadow:inset -1.5px -1.5px 0 #7a6f22"></div><div class="a" style="left:202.0px;top:139.0px;width:7.0px;height:13.0px;background:#e6d348;box-shadow:inset -1.5px -1.5px 0 #7a6f22"></div><div class="a" style="left:202.0px;top:152.0px;width:7.0px;height:13.0px;background:#e6d348;box-shadow:inset -1.5px -1.5px 0 #7a6f22"></div><div class="a" style="left:202.0px;top:165.0px;width:7.0px;height:11.0px;background:#e6d348;box-shadow:inset -1.5px -1.5px 0 #7a6f22"></div><div class="a" style="left:199.0px;top:168.0px;width:5.0px;height:13.0px;background:#e6d348;box-shadow:inset -1.5px -1.5px 0 #7a6f22"></div><div class="a" style="left:202.0px;top:176.0px;width:7.0px;height:11.0px;background:#e6d348;box-shadow:inset -1.5px -1.5px 0 #7a6f22"></div><div class="a" style="left:202.0px;top:187.0px;width:7.0px;height:12.0px;background:#e6d348;box-shadow:inset -1.5px -1.5px 0 #7a6f22"></div><div class="a" style="left:193.0px;top:140.0px;width:7.5px;height:11.0px;background:#e6d348;box-shadow:inset -1.5px -1.5px 0 #7a6f22"></div><div class="a" style="left:119.0px;top:49.0px;width:18.7px;height:10.0px;background:#c63c3c;"></div><div class="a" style="left:146.0px;top:82.0px;width:22.0px;height:10.0px;background:#c63c3c;"></div><div class="a" style="left:144.0px;top:97.0px;width:10.0px;height:5.0px;background:#c63c3c;"></div><div class="a" style="left:187.0px;top:82.0px;width:7.0px;height:10.0px;background:#c63c3c;"></div><div class="a" style="left:144.0px;top:114.0px;width:14.0px;height:8.0px;background:#c63c3c;"></div><div class="a" style="left:144.0px;top:138.0px;width:7.0px;height:7.0px;background:#c63c3c;"></div><div class="a" style="left:144.0px;top:163.0px;width:7.0px;height:6.0px;background:#c63c3c;"></div><div class="a" style="left:218.0px;top:82.0px;width:6.0px;height:10.0px;background:#c63c3c;"></div><div class="a" style="left:214.0px;top:114.0px;width:7.0px;height:6.0px;background:#c63c3c;"></div><div class="a" style="left:284.0px;top:114.0px;width:7.0px;height:7.0px;background:#c63c3c;"></div><div class="a" style="left:284.0px;top:138.0px;width:7.0px;height:7.0px;background:#c63c3c;"></div><div class="a" style="left:284.0px;top:162.0px;width:7.0px;height:7.0px;background:#c63c3c;"></div><div class="a" style="left:214.0px;top:162.0px;width:7.0px;height:7.0px;background:#c63c3c;"></div><div class="a" style="left:100.5px;top:38.0px;width:5.5px;height:5.0px;background:#5f7ed6;"></div><div class="a" style="left:104.0px;top:42.0px;width:5.5px;height:5.5px;background:#5f7ed6;"></div><div class="a" style="left:203.0px;top:38.0px;width:6.0px;height:9.0px;background:#5f7ed6;"></div><div class="a" style="left:301.0px;top:40.0px;width:6.0px;height:6.0px;background:#5f7ed6;"></div><div class="a" style="left:304.0px;top:38.0px;width:6.0px;height:6.0px;background:#5f7ed6;"></div><div class="a" style="left:100.0px;top:120.0px;width:4.0px;height:6.0px;background:#5f7ed6;"></div><div class="a" style="left:306.0px;top:120.0px;width:5.0px;height:6.0px;background:#5f7ed6;"></div><div class="a" style="left:100.0px;top:198.0px;width:6.0px;height:6.0px;background:#5f7ed6;"></div><div class="a" style="left:103.0px;top:202.0px;width:6.0px;height:6.0px;background:#5f7ed6;"></div><div class="a" style="left:302.0px;top:199.0px;width:6.0px;height:6.0px;background:#5f7ed6;"></div><div class="a" style="left:305.0px;top:202.0px;width:6.0px;height:6.0px;background:#5f7ed6;"></div><div class="a" style="left:134.5px;top:72.5px;width:7.1px;height:7.5px;background:#5f7ed6;"></div><div class="a" style="left:144.0px;top:89.0px;width:7.0px;height:8.0px;background:#5f7ed6;"></div><div class="a" style="left:144.0px;top:102.0px;width:7.0px;height:8.0px;background:#5f7ed6;"></div><div class="a" style="left:216.0px;top:73.0px;width:7.0px;height:7.0px;background:#5f7ed6;"></div><div class="a" style="left:299.0px;top:73.0px;width:6.0px;height:8.0px;background:#5f7ed6;"></div><div class="a" style="left:299.0px;top:90.0px;width:6.0px;height:8.0px;background:#5f7ed6;"></div><div class="a" style="left:299.0px;top:103.0px;width:6.0px;height:8.0px;background:#5f7ed6;"></div><div class="a" style="left:300.0px;top:134.0px;width:5.0px;height:6.0px;background:#5f7ed6;"></div><div class="a" style="left:135.0px;top:135.0px;width:7.0px;height:6.0px;background:#5f7ed6;"></div><div class="a" style="left:135.0px;top:196.0px;width:7.0px;height:7.0px;background:#5f7ed6;"></div><div class="a" style="left:216.0px;top:196.0px;width:7.0px;height:7.0px;background:#5f7ed6;"></div><div class="a" style="left:267.0px;top:182.0px;width:7.0px;height:17.0px;background:#5f7ed6;"></div><div class="a" style="left:295.0px;top:182.0px;width:7.0px;height:16.0px;background:#5f7ed6;"></div><div class="a" style="left:154.0px;top:92.0px;width:10.0px;height:16.0px;background:#e8bfa0;"></div><div class="a" style="left:187.0px;top:92.0px;width:7.0px;height:16.0px;background:#e8bfa0;"></div><div class="a" style="left:217.0px;top:92.0px;width:7.0px;height:16.0px;background:#e8bfa0;"></div><div class="a" style="left:164.0px;top:95.0px;width:52.0px;height:8.0px;background:#2f7fe8;"></div><div class="a" style="left:217.0px;top:106.0px;width:7.0px;height:6.0px;background:#2a2a3a;"></div><div class="a" style="left:109.0px;top:47.0px;width:10.0px;height:12.6px;background:#b4b4d0;box-shadow:inset 0 0 0 1px #7a7aa8"></div><svg class="a" style="left:121.5px;top:48.5px" width="11.0" height="11.0" viewBox="0 0 11.0 11.0"><path d="M5.5 0.7 L10.3 5.5 L5.5 10.3 L0.7 5.5 Z" fill="none" stroke="#f0a0a0" stroke-width="1.1"/><circle cx="5.5" cy="5.5" r="1.6" fill="#3a1a1a"/></svg><svg class="a" style="left:145.5px;top:81.5px" width="11.0" height="11.0" viewBox="0 0 11.0 11.0"><path d="M5.5 0.7 L10.3 5.5 L5.5 10.3 L0.7 5.5 Z" fill="none" stroke="#f0a0a0" stroke-width="1.1"/><circle cx="5.5" cy="5.5" r="1.6" fill="#3a1a1a"/></svg><svg class="a" style="left:158.5px;top:81.5px" width="11.0" height="11.0" viewBox="0 0 11.0 11.0"><path d="M5.5 0.7 L10.3 5.5 L5.5 10.3 L0.7 5.5 Z" fill="none" stroke="#f0a0a0" stroke-width="1.1"/><circle cx="5.5" cy="5.5" r="1.6" fill="#3a1a1a"/></svg><svg class="a" style="left:144.5px;top:112.5px" width="11.0" height="11.0" viewBox="0 0 11.0 11.0"><path d="M5.5 0.7 L10.3 5.5 L5.5 10.3 L0.7 5.5 Z" fill="none" stroke="#f0a0a0" stroke-width="1.1"/><circle cx="5.5" cy="5.5" r="1.6" fill="#3a1a1a"/></svg><svg class="a" style="left:110px;top:48px" width="9" height="11" viewBox="0 0 9 11"><path d="M6.5 2 L3 9 M3 9 L7 9" stroke="#4a4a78" stroke-width="0.9" fill="none"/></svg><svg class="a" style="left:201px;top:117px" width="12" height="12" viewBox="0 0 12 12"><path d="M6 0.8 L11.2 6 L6 11.2 L0.8 6 Z" fill="rgba(170,180,220,0.5)" stroke="#9aa4d0" stroke-width="1.2"/></svg><svg class="a" style="left:209px;top:122px" width="12" height="12" viewBox="0 0 12 12"><path d="M6 0.8 L11.2 6 L6 11.2 L0.8 6 Z" fill="rgba(170,180,220,0.5)" stroke="#9aa4d0" stroke-width="1.2"/></svg><svg class="a" style="left:203px;top:128px" width="12" height="12" viewBox="0 0 12 12"><path d="M6 0.8 L11.2 6 L6 11.2 L0.8 6 Z" fill="rgba(170,180,220,0.5)" stroke="#9aa4d0" stroke-width="1.2"/></svg><svg class="a" style="left:213px;top:132px" width="12" height="12" viewBox="0 0 12 12"><path d="M6 0.8 L11.2 6 L6 11.2 L0.8 6 Z" fill="rgba(170,180,220,0.5)" stroke="#9aa4d0" stroke-width="1.2"/></svg><div class="a" style="left:215px;top:133px;width:8px;height:8px;border-radius:50%;background:#5f7ed6;border:1.5px solid #9aa4d0"></div><div class="a" style="left:255.0px;top:151.0px;width:13.0px;height:23.0px;background:#b4b4d0;"></div><div class="a" style="left:250.0px;top:156.0px;width:23.0px;height:13.0px;background:#b4b4d0;"></div><div class="a" style="left:258px;top:160px;width:5px;height:5px;border-radius:50%;background:#333"></div><div class="a" style="left:274.0px;top:185.0px;width:20.0px;height:15.5px;background:#c63c3c;"></div><svg class="a" style="left:276.0px;top:185.0px" width="10" height="10" viewBox="0 0 10 10"><path d="M5 0.7 L9.3 5 L5 9.3 L0.7 5 Z" fill="none" stroke="#f0a0a0" stroke-width="1.1"/><circle cx="5" cy="5" r="1.6" fill="#3a1a1a"/></svg><svg class="a" style="left:283.0px;top:185.0px" width="10" height="10" viewBox="0 0 10 10"><path d="M5 0.7 L9.3 5 L5 9.3 L0.7 5 Z" fill="none" stroke="#f0a0a0" stroke-width="1.1"/><circle cx="5" cy="5" r="1.6" fill="#3a1a1a"/></svg><div class="a" style="left:281.0px;top:194.0px;width:6.0px;height:6.0px;background:#34345a;box-shadow:inset 0 0 0 1px #a0a0c0"></div><div class="a" style="left:288.0px;top:194.0px;width:5.0px;height:6.0px;background:#34345a;box-shadow:inset 0 0 0 1px #a0a0c0"></div><div class="a" style="left:295.0px;top:194.0px;width:7.0px;height:6.0px;background:#2a2a40;box-shadow:inset 0 0 0 1px #9090b0"></div><svg class="a" style="left:0;top:0" width="409" height="260" viewBox="397 124 409 260"><g stroke="#75758f" stroke-width="1.3" fill="none"><path d="M596 228 L690 322"/><path d="M605 228 L697 320"/><path d="M620 238 L700 318"/><path d="M612 262 L672 312"/></g><path d="M699 330 L710 377" stroke="#666" stroke-width="1.2" stroke-dasharray="1.5 1"/></svg><svg class="a" style="left:309px;top:252px" width="9" height="9" viewBox="0 0 9 9"><rect x="1" y="1" width="7" height="7" fill="none" stroke="#c8c8c8" stroke-width="1"/><rect x="3.5" y="3.5" width="2" height="2" fill="#c8c8c8"/></svg><svg class="a" style="left:197px;top:242px" width="14" height="14" viewBox="0 0 14 14"><circle cx="7" cy="7" r="4" fill="#3a3a2a" stroke="#e6df90" stroke-width="1.6"/><path d="M7 0 V3 M7 11 V14 M0 7 H3 M11 7 H14" stroke="#e6df90" stroke-width="1.4"/></svg>
</div>
<div class="a" style="left:266px;top:438px;width:671px;height:1px;background:#141414;"></div>
<div class="a" style="left:274px;top:443px;width:63px;height:13px;background:#121212;border-radius:2px"></div>
<div class="t" style="left:280px;top:445.38px;font-size:9px;color:#cfcfcf;font-weight:normal;">50%</div>
<svg class="a" style="left:321px;top:446px;" width="10" height="7" viewBox="0 0 10 7"><path d="M1 1.5 L5 5.5 L9 1.5" fill="none" stroke="#d8d8d8" stroke-width="1.4"/></svg>
<div class="a" style="left:346px;top:442px;width:1px;height:15px;background:#2e2e2e;"></div>
<div class="a" style="left:354px;top:443px;width:73px;height:13px;background:#121212;border-radius:2px"></div>
<div class="t" style="left:360px;top:445.38px;font-size:9px;color:#cfcfcf;font-weight:normal;">(Half)</div>
<svg class="a" style="left:412px;top:446px;" width="10" height="7" viewBox="0 0 10 7"><path d="M1 1.5 L5 5.5 L9 1.5" fill="none" stroke="#d8d8d8" stroke-width="1.4"/></svg>
<div class="a" style="left:434px;top:442px;width:1px;height:15px;background:#2e2e2e;"></div>
<div class="a" style="left:442px;top:442px;width:17px;height:15px;background:#3c3c3c;border-radius:3px"></div>
<svg class="a" style="left:444px;top:443px;" width="13" height="13" viewBox="0 0 13 13"><rect x="1" y="1.5" width="10" height="9" fill="none" stroke="#d8d8d8" stroke-width="1"/><path d="M7 3 L4 7 H6.5 L5 10" fill="none" stroke="#d8d8d8" stroke-width="1"/><path d="M8 10 L12 10 L10 12.5 Z" fill="#d8d8d8"/></svg>
<svg class="a" style="left:463px;top:444px;" width="13" height="11" viewBox="0 0 13 11"><rect x="0.5" y="0.5" width="12" height="10" fill="none" stroke="#d0d0d0" stroke-width="1"/><rect x="2.5" y="2.5" width="2.5" height="2.5" fill="#d0d0d0"/><rect x="7.5" y="2.5" width="2.5" height="2.5" fill="#d0d0d0"/><rect x="5" y="5" width="2.5" height="2.5" fill="#d0d0d0"/><rect x="2.5" y="7" width="2.5" height="2" fill="#d0d0d0"/><rect x="7.5" y="7" width="2.5" height="2" fill="#d0d0d0"/></svg>
<div class="a" style="left:481px;top:442px;width:17px;height:15px;background:#3c3c3c;border-radius:3px"></div>
<svg class="a" style="left:483px;top:444px;" width="13" height="12" viewBox="0 0 13 12"><path d="M3.5 2 H11 V10.5 H1 Z" fill="none" stroke="#d8d8d8" stroke-width="1"/><rect x="2" y="0.5" width="3" height="3" fill="#d8d8d8"/><rect x="9.5" y="0.5" width="3" height="3" fill="#d8d8d8"/><rect x="0" y="9" width="3" height="3" fill="#d8d8d8"/><rect x="9.5" y="9" width="3" height="3" fill="#d8d8d8"/></svg>
<svg class="a" style="left:503px;top:444px;" width="12" height="11" viewBox="0 0 12 11"><rect x="0.5" y="0.5" width="11" height="10" fill="none" stroke="#d0d0d0" stroke-width="1"/><rect x="3" y="3.5" width="6" height="4" fill="#d0d0d0"/></svg>
<svg class="a" style="left:522px;top:443px;" width="13" height="13" viewBox="0 0 13 13"><rect x="1" y="1.5" width="11" height="8" fill="none" stroke="#d0d0d0" stroke-width="1" stroke-dasharray="3 1.5"/><path d="M6.5 3 V8 M4 5.5 H9" stroke="#d0d0d0" stroke-width="1"/><path d="M8.5 11 H12 L10.25 12.8 Z" fill="#d0d0d0"/></svg>
<div class="a" style="left:544px;top:442px;width:1px;height:15px;background:#2e2e2e;"></div>
<svg class="a" style="left:553px;top:443px;" width="13" height="13" viewBox="0 0 13 13"><circle cx="6.5" cy="3.8" r="2.6" fill="#e0403a"/><circle cx="4.3" cy="7" r="2.6" fill="#3aa84a"/><circle cx="8.7" cy="7" r="2.6" fill="#4a6ee0"/><path d="M4.5 11 H9 L6.75 12.8 Z" fill="#d0d0d0"/></svg>
<svg class="a" style="left:574px;top:443px;" width="11" height="11" viewBox="0 0 11 11"><circle cx="5.5" cy="5.5" r="4.8" fill="#d0d0d0"/><circle cx="5.5" cy="5.5" r="2" fill="#1f1f1f"/><path d="M5.5 0.7 L6.5 3.5 M10.3 5.5 L7.5 6.5 M5.5 10.3 L4.5 7.5 M0.7 5.5 L3.5 4.5" stroke="#1f1f1f" stroke-width="1"/></svg>
<div class="t" style="left:592.5px;top:445.38px;font-size:9px;color:#6e9ee6;font-weight:normal;">+0.0</div>
<div class="a" style="left:625px;top:442px;width:1px;height:15px;background:#2e2e2e;"></div>
<svg class="a" style="left:635px;top:444px;" width="13" height="11" viewBox="0 0 13 11"><path d="M0.5 2.5 H3.5 L4.5 0.8 H8.5 L9.5 2.5 H12.5 V10.5 H0.5 Z" fill="#d4d4d4"/><circle cx="6.5" cy="6.2" r="2.6" fill="#1f1f1f"/><circle cx="6.5" cy="6.2" r="1.6" fill="#d4d4d4"/></svg>
<svg class="a" style="left:654px;top:443px;" width="14" height="13" viewBox="0 0 14 13"><path d="M1 8 Q5 3.5 9 8 Q5 12.5 1 8 Z" fill="none" stroke="#a8a8a8" stroke-width="1"/><circle cx="5" cy="8" r="1.4" fill="#a8a8a8"/><circle cx="10" cy="4" r="3" fill="none" stroke="#a8a8a8" stroke-width="1"/></svg>
<div class="a" style="left:677px;top:442px;width:1px;height:15px;background:#2e2e2e;"></div>
<div class="a" style="left:685px;top:443px;width:55px;height:14px;background:#121212;border-radius:2px"></div>
<div class="t" style="left:692px;top:445.88px;font-size:9px;color:#c8c8c8;font-weight:normal;">0:00:05:23</div>
<div class="a" style="left:941px;top:4px;width:259px;height:455px;background:#1f1f1f;"></div>
<div class="a" style="left:1189px;top:7px;width:7px;height:438px;background:#4b4b4b;border-radius:4px"></div>
<div class="t" style="left:951px;top:10.38px;font-size:9px;color:#d4d4d4;font-weight:normal;">Properties: 59 layers selected</div>
<svg class="a" style="left:1170px;top:11px;" width="8" height="7" viewBox="0 0 8 7"><rect x="0.5" y="0" width="7" height="1.2" fill="#c8c8c8"/><rect x="0.5" y="2.6" width="7" height="1.2" fill="#c8c8c8"/><rect x="0.5" y="5.2" width="7" height="1.2" fill="#c8c8c8"/></svg>
<div class="t" style="left:950.5px;top:28.30px;font-size:8.5px;color:#d4d4d4;font-weight:bold;">Layer Transform</div>
<div class="t" style="left:1065px;top:27.88px;font-size:9px;color:#6e9ee6;font-weight:normal;">Reset</div>
<svg class="a" style="left:959px;top:42px;" width="12" height="12" viewBox="0 0 12 12"><circle cx="6" cy="7.2" r="4" fill="none" stroke="#cfcfcf" stroke-width="1.1"/><path d="M4 1 H8 M4.8 1 L5.5 3.2 M7.2 1 L6.5 3.2" stroke="#cfcfcf" stroke-width="1"/></svg>
<div class="t" style="left:989px;top:44.38px;font-size:9px;color:#c8c8c8;font-weight:normal;">Anchor Point</div>
<div class="t" style="left:989px;top:60.88px;font-size:9px;color:#c8c8c8;font-weight:normal;">Position</div>
<svg class="a" style="left:951px;top:61px;" width="30" height="8" viewBox="0 0 30 8"><path d="M6 0.5 L1 4 L6 7.5 Z" fill="#cfcfcf"/><path d="M14.5 0.8 L17.7 4 L14.5 7.2 L11.3 4 Z" fill="none" stroke="#cfcfcf" stroke-width="1"/><path d="M23 0.5 L28 4 L23 7.5 Z" fill="#cfcfcf"/></svg>
<div class="t" style="left:989px;top:77.38px;font-size:9px;color:#c8c8c8;font-weight:normal;">Scale</div>
<svg class="a" style="left:951px;top:78px;" width="30" height="8" viewBox="0 0 30 8"><path d="M6 0.5 L1 4 L6 7.5 Z" fill="#cfcfcf"/><path d="M14.5 0.8 L17.7 4 L14.5 7.2 L11.3 4 Z" fill="none" stroke="#cfcfcf" stroke-width="1"/><path d="M23 0.5 L28 4 L23 7.5 Z" fill="#cfcfcf"/></svg>
<div class="t" style="left:989px;top:93.88px;font-size:9px;color:#c8c8c8;font-weight:normal;">Rotation</div>
<svg class="a" style="left:951px;top:94px;" width="30" height="8" viewBox="0 0 30 8"><path d="M6 0.5 L1 4 L6 7.5 Z" fill="#cfcfcf"/><path d="M14.5 0.8 L17.7 4 L14.5 7.2 L11.3 4 Z" fill="none" stroke="#cfcfcf" stroke-width="1"/><path d="M23 0.5 L28 4 L23 7.5 Z" fill="#5a5a5a"/></svg>
<div class="t" style="left:989px;top:110.38px;font-size:9px;color:#c8c8c8;font-weight:normal;">Opacity</div>
<svg class="a" style="left:951px;top:110px;" width="30" height="8" viewBox="0 0 30 8"><path d="M6 0.5 L1 4 L6 7.5 Z" fill="#cfcfcf"/><path d="M14.5 0.8 L17.7 4 L14.5 7.2 L11.3 4 Z" fill="none" stroke="#cfcfcf" stroke-width="1"/><path d="M23 0.5 L28 4 L23 7.5 Z" fill="#cfcfcf"/></svg>
<div class="t" style="left:1065px;top:44.38px;font-size:9px;color:#6e9ee6;font-weight:normal;">&#8211;</div>
<div class="a" style="left:1064px;top:55px;width:32px;height:1px;background:#4a4a4a;"></div>
<div class="t" style="left:1105px;top:44.38px;font-size:9px;color:#6e9ee6;font-weight:normal;">&#8211;</div>
<div class="a" style="left:1104px;top:55px;width:32px;height:1px;background:#4a4a4a;"></div>
<div class="t" style="left:1065px;top:60.88px;font-size:9px;color:#6e9ee6;font-weight:normal;">&#8211;</div>
<div class="a" style="left:1064px;top:71.5px;width:32px;height:1px;background:#4a4a4a;"></div>
<div class="t" style="left:1105px;top:60.88px;font-size:9px;color:#6e9ee6;font-weight:normal;">&#8211;</div>
<div class="a" style="left:1104px;top:71.5px;width:32px;height:1px;background:#4a4a4a;"></div>
<div class="t" style="left:1065px;top:77.38px;font-size:9px;color:#6e9ee6;font-weight:normal;">&#8211;<span style="color:#d0d0d0">%</span></div>
<div class="a" style="left:1064px;top:88px;width:32px;height:1px;background:#4a4a4a;"></div>
<div class="t" style="left:1105px;top:77.38px;font-size:9px;color:#6e9ee6;font-weight:normal;">&#8211;<span style="color:#d0d0d0">%</span></div>
<div class="a" style="left:1104px;top:88px;width:32px;height:1px;background:#4a4a4a;"></div>
<div class="t" style="left:1065px;top:93.88px;font-size:9px;color:#6e9ee6;font-weight:normal;"><span style="color:#b8b8b8">&#8211;x&#8211;&#176;</span></div>
<div class="a" style="left:1064px;top:104.5px;width:43px;height:1px;background:#4a4a4a;"></div>
<div class="t" style="left:1065px;top:110.38px;font-size:9px;color:#6e9ee6;font-weight:normal;">&#8211;<span style="color:#d0d0d0">%</span></div>
<div class="a" style="left:1064px;top:121px;width:32px;height:1px;background:#4a4a4a;"></div>
<svg class="a" style="left:1045px;top:77px;" width="13" height="10" viewBox="0 0 13 10"><g transform="rotate(-20 6.5 5)"><rect x="0.8" y="2.5" width="6.8" height="5" rx="2.5" fill="none" stroke="#5a88e0" stroke-width="1.4"/><rect x="5.2" y="2.5" width="6.8" height="5" rx="2.5" fill="none" stroke="#5a88e0" stroke-width="1.4"/></g></svg>
<div class="a" style="left:941px;top:134px;width:244px;height:1px;background:#0e0e0e;"></div>
<div class="t" style="left:951px;top:141.38px;font-size:9px;color:#d4d4d4;font-weight:normal;">Info</div>
<svg class="a" style="left:1170px;top:142px;" width="8" height="7" viewBox="0 0 8 7"><rect x="0.5" y="0" width="7" height="1.2" fill="#c8c8c8"/><rect x="0.5" y="2.6" width="7" height="1.2" fill="#c8c8c8"/><rect x="0.5" y="5.2" width="7" height="1.2" fill="#c8c8c8"/></svg>
<div class="a" style="left:948px;top:169px;width:16px;height:16px;background:#050505;"></div>
<div class="t" style="left:968.5px;top:160.90px;font-size:8.5px;color:#c8c8c8;font-weight:normal;">R :</div>
<div class="t" style="left:968.5px;top:171.70px;font-size:8.5px;color:#c8c8c8;font-weight:normal;">G :</div>
<div class="t" style="left:968.5px;top:182.40px;font-size:8.5px;color:#c8c8c8;font-weight:normal;">B :</div>
<div class="t" style="left:968.5px;top:192.90px;font-size:8.5px;color:#c8c8c8;font-weight:normal;">A :&nbsp; 0</div>
<div class="t" style="left:1042px;top:160.90px;font-size:8.5px;color:#c8c8c8;font-weight:normal;">X : &nbsp;1744</div>
<div class="t" style="left:1042px;top:171.70px;font-size:8.5px;color:#c8c8c8;font-weight:normal;">Y : &nbsp;1472</div>
<svg class="a" style="left:1032px;top:178px;" width="9" height="9" viewBox="0 0 9 9"><path d="M4.5 0 V9 M0 4.5 H9" stroke="#c8c8c8" stroke-width="1"/></svg>
<div class="a" style="left:945px;top:207px;width:233px;height:1px;background:#2a2a2a;"></div>
<div class="a" style="left:941px;top:238px;width:244px;height:1px;background:#0e0e0e;"></div>
<div class="t" style="left:951px;top:246.38px;font-size:9px;color:#d4d4d4;font-weight:normal;">Preview</div>
<svg class="a" style="left:1170px;top:247px;" width="8" height="7" viewBox="0 0 8 7"><rect x="0.5" y="0" width="7" height="1.2" fill="#c8c8c8"/><rect x="0.5" y="2.6" width="7" height="1.2" fill="#c8c8c8"/><rect x="0.5" y="5.2" width="7" height="1.2" fill="#c8c8c8"/></svg>
<svg class="a" style="left:978px;top:267px;" width="92" height="9" viewBox="0 0 92 9"><rect x="1" y="0.5" width="1.5" height="8" fill="#cfcfcf"/><path d="M11 0.5 L3.5 4.5 L11 8.5 Z" fill="#cfcfcf"/><path d="M27 0.5 L19.5 4.5 L27 8.5 Z" fill="#cfcfcf"/><rect x="28.5" y="0.5" width="1.5" height="8" fill="#cfcfcf"/><path d="M42 0.5 L49.5 4.5 L42 8.5 Z" fill="#cfcfcf"/><rect x="60" y="0.5" width="1.5" height="8" fill="#cfcfcf"/><path d="M63 0.5 L70.5 4.5 L63 8.5 Z" fill="#cfcfcf"/><path d="M79.5 0.5 L87 4.5 L79.5 8.5 Z" fill="#cfcfcf"/><rect x="88" y="0.5" width="1.5" height="8" fill="#cfcfcf"/></svg>
<div class="a" style="left:945px;top:283px;width:161px;height:1px;background:#2a2a2a;"></div>
<div class="t" style="left:946px;top:292.88px;font-size:9px;color:#c8c8c8;font-weight:normal;">Shortcut</div>
<div class="a" style="left:947px;top:304px;width:136px;height:15px;background:#121212;border-radius:3px"></div>
<div class="t" style="left:953px;top:307.68px;font-size:9px;color:#d0d0d0;font-weight:normal;">Option+Numpad .</div>
<svg class="a" style="left:1068.5px;top:308px;" width="10" height="7" viewBox="0 0 10 7"><path d="M1 1.5 L5 5.5 L9 1.5" fill="none" stroke="#d8d8d8" stroke-width="1.4"/></svg>
<svg class="a" style="left:1090px;top:306px;" width="12" height="12" viewBox="0 0 12 12"><path d="M3 3.5 A4 4 0 1 1 2.5 8" fill="none" stroke="#cfcfcf" stroke-width="1.2"/><path d="M1 1.5 L4 4.5 L1 5 Z" fill="#cfcfcf"/><rect x="1" y="10.5" width="10" height="1" fill="#cfcfcf"/></svg>
<div class="a" style="left:941px;top:324px;width:244px;height:1px;background:#0e0e0e;"></div>
<div class="t" style="left:951px;top:332.38px;font-size:9px;color:#d4d4d4;font-weight:normal;">Align</div>
<svg class="a" style="left:1170px;top:334px;" width="8" height="7" viewBox="0 0 8 7"><rect x="0.5" y="0" width="7" height="1.2" fill="#c8c8c8"/><rect x="0.5" y="2.6" width="7" height="1.2" fill="#c8c8c8"/><rect x="0.5" y="5.2" width="7" height="1.2" fill="#c8c8c8"/></svg>
<div class="t" style="left:946px;top:358.88px;font-size:9px;color:#c8c8c8;font-weight:normal;">Align Layers to:</div>
<div class="a" style="left:1014px;top:354px;width:84px;height:17px;background:#121212;border-radius:3px"></div>
<div class="t" style="left:1020px;top:358.88px;font-size:9px;color:#d0d0d0;font-weight:normal;">Selection</div>
<svg class="a" style="left:1083px;top:359px;" width="10" height="7" viewBox="0 0 10 7"><path d="M1 1.5 L5 5.5 L9 1.5" fill="none" stroke="#d8d8d8" stroke-width="1.4"/></svg>
<svg class="a" style="left:950px;top:383px;" width="12" height="12" viewBox="0 0 12 12"><rect x="0.5" y="0" width="1" height="12" fill="#c4c4c4"/><rect x="2.5" y="2" width="5" height="3" fill="#c4c4c4"/><rect x="2.5" y="7" width="8" height="3" fill="#c4c4c4"/></svg>
<svg class="a" style="left:977px;top:383px;" width="12" height="12" viewBox="0 0 12 12"><rect x="5.5" y="0" width="1" height="12" fill="#c4c4c4"/><rect x="3.5" y="2" width="5" height="3" fill="#c4c4c4"/><rect x="2" y="7" width="8" height="3" fill="#c4c4c4"/></svg>
<svg class="a" style="left:1005px;top:383px;" width="12" height="12" viewBox="0 0 12 12"><rect x="10.5" y="0" width="1" height="12" fill="#c4c4c4"/><rect x="4.5" y="2" width="5" height="3" fill="#c4c4c4"/><rect x="1.5" y="7" width="8" height="3" fill="#c4c4c4"/></svg>
<svg class="a" style="left:1033px;top:383px;" width="12" height="12" viewBox="0 0 12 12"><rect x="0" y="0.5" width="12" height="1" fill="#c4c4c4"/><rect x="2" y="2.5" width="3" height="9" fill="#c4c4c4"/><rect x="7" y="2.5" width="3" height="5" fill="#c4c4c4"/></svg>
<svg class="a" style="left:1061px;top:383px;" width="12" height="12" viewBox="0 0 12 12"><rect x="0" y="5.5" width="12" height="1" fill="#c4c4c4"/><rect x="2" y="1.5" width="3" height="9" fill="#c4c4c4"/><rect x="7" y="3.5" width="3" height="5" fill="#c4c4c4"/></svg>
<svg class="a" style="left:1089px;top:383px;" width="12" height="12" viewBox="0 0 12 12"><rect x="0" y="10.5" width="12" height="1" fill="#c4c4c4"/><rect x="2" y="1.5" width="3" height="9" fill="#c4c4c4"/><rect x="7" y="5.5" width="3" height="5" fill="#c4c4c4"/></svg>
<div class="a" style="left:945px;top:405px;width:161px;height:1px;background:#2a2a2a;"></div>
<div class="t" style="left:946px;top:416.38px;font-size:9px;color:#c8c8c8;font-weight:normal;">Distribute Layers:</div>
<svg class="a" style="left:950px;top:435px;" width="12" height="12" viewBox="0 0 12 12"><rect x="0" y="0.5" width="12" height="1" fill="#c4c4c4"/><rect x="3" y="2" width="6" height="2.5" fill="#c4c4c4"/><rect x="0" y="6.5" width="12" height="1" fill="#c4c4c4"/><rect x="2" y="8" width="8" height="3" fill="#c4c4c4"/></svg>
<svg class="a" style="left:977px;top:435px;" width="12" height="12" viewBox="0 0 12 12"><rect x="0" y="3" width="12" height="1" fill="#c4c4c4"/><rect x="3" y="2" width="6" height="3" fill="#c4c4c4"/><rect x="0" y="9" width="12" height="1" fill="#c4c4c4"/><rect x="2" y="8" width="8" height="3" fill="#c4c4c4"/></svg>
<svg class="a" style="left:1005px;top:435px;" width="12" height="12" viewBox="0 0 12 12"><rect x="3" y="0.5" width="6" height="3" fill="#c4c4c4"/><rect x="0" y="4.5" width="12" height="1" fill="#c4c4c4"/><rect x="2" y="6.5" width="8" height="3" fill="#c4c4c4"/><rect x="0" y="10.5" width="12" height="1" fill="#c4c4c4"/></svg>
<svg class="a" style="left:1033px;top:435px;" width="12" height="12" viewBox="0 0 12 12"><rect x="0.5" y="0" width="1" height="12" fill="#c4c4c4"/><rect x="2" y="2" width="2.5" height="8" fill="#c4c4c4"/><rect x="6.5" y="0" width="1" height="12" fill="#c4c4c4"/><rect x="8" y="3" width="3" height="6" fill="#c4c4c4"/></svg>
<svg class="a" style="left:1061px;top:435px;" width="12" height="12" viewBox="0 0 12 12"><rect x="3" y="0" width="1" height="12" fill="#c4c4c4"/><rect x="2" y="2" width="3" height="8" fill="#c4c4c4"/><rect x="9" y="0" width="1" height="12" fill="#c4c4c4"/><rect x="8" y="3" width="3" height="6" fill="#c4c4c4"/></svg>
<svg class="a" style="left:1089px;top:435px;" width="12" height="12" viewBox="0 0 12 12"><rect x="0.5" y="2" width="3" height="8" fill="#c4c4c4"/><rect x="4.5" y="0" width="1" height="12" fill="#c4c4c4"/><rect x="7" y="3" width="3" height="6" fill="#c4c4c4"/><rect x="10.5" y="0" width="1" height="12" fill="#c4c4c4"/></svg>
<div class="a" style="left:0px;top:462px;width:1200px;height:242px;background:#1f1f1f;"></div>
<div class="t" style="left:23.3px;top:468.60px;font-size:8.5px;color:#c8c8c8;font-weight:normal;">Render Queue</div>
<div class="a" style="left:126px;top:467px;width:8px;height:8px;background:#c4b48c;"></div>
<div class="t" style="left:143px;top:468.60px;font-size:8.5px;color:#c8c8c8;font-weight:normal;">Comp 1</div>
<svg class="a" style="left:207px;top:471px;" width="6" height="6" viewBox="0 0 6 6"><path d="M0.8 0.8 L5.2 5.2 M5.2 0.8 L0.8 5.2" stroke="#cfcfcf" stroke-width="1"/></svg>
<div class="a" style="left:218px;top:467px;width:8px;height:8px;background:#c4b48c;"></div>
<div class="t" style="left:236.5px;top:468.18px;font-size:9px;color:#dedede;font-weight:normal;">Comp 2</div>
<svg class="a" style="left:276px;top:470px;" width="8" height="7" viewBox="0 0 8 7"><rect x="0.5" y="0" width="7" height="1.2" fill="#c8c8c8"/><rect x="0.5" y="2.6" width="7" height="1.2" fill="#c8c8c8"/><rect x="0.5" y="5.2" width="7" height="1.2" fill="#c8c8c8"/></svg>
<div class="a" style="left:208px;top:480px;width:75px;height:1px;background:#c8c8c8;"></div>
<div class="t" style="left:14px;top:485.47px;font-size:12.2px;color:#5b9cf0;font-weight:bold;letter-spacing:-0.1px">0:00:05:23</div>
<div class="t" style="left:10px;top:499.33px;font-size:8px;color:#3f6fb8;font-weight:normal;">00173 (29.876 fps)</div>
<div class="a" style="left:87px;top:488px;width:298px;height:15px;background:#101010;border-radius:3px"></div>
<svg class="a" style="left:92px;top:490px;" width="16" height="11" viewBox="0 0 16 11"><circle cx="4.5" cy="4.5" r="3.3" fill="none" stroke="#d0d0d0" stroke-width="1.1"/><path d="M6.9 6.9 L9.2 9.2" stroke="#d0d0d0" stroke-width="1.2"/><path d="M9.5 5 L11 6.5 L12.5 5" fill="none" stroke="#d0d0d0" stroke-width="0.9"/></svg>
<svg class="a" style="left:395px;top:491px;" width="15" height="12" viewBox="0 0 15 12"><rect x="0" y="2" width="3" height="2" fill="#d0d0d0"/><path d="M3 3 H8 M6 3 V9 H9 M6 6 H9" stroke="#d0d0d0" stroke-width="1" fill="none"/><rect x="8.5" y="1.5" width="3" height="3" fill="#d0d0d0"/><rect x="9" y="5" width="3" height="2.5" fill="#d0d0d0"/><rect x="9" y="8" width="3" height="2.5" fill="#d0d0d0"/><path d="M12 10 H14 L13 11.5 Z" fill="#d0d0d0"/></svg>
<svg class="a" style="left:415px;top:491px;" width="14" height="12" viewBox="0 0 14 12"><path d="M2 6 A5 5 0 0 1 12 6 Z" fill="#d0d0d0"/><rect x="6" y="6" width="2" height="4" fill="#d0d0d0"/><rect x="0" y="8" width="14" height="1.2" fill="#d0d0d0"/><rect x="2" y="10" width="10" height="2" fill="#666"/></svg>
<svg class="a" style="left:435px;top:490px;" width="13" height="13" viewBox="0 0 13 13"><rect x="3" y="0.5" width="9.5" height="9" fill="#d0d0d0"/><rect x="0.5" y="3" width="9" height="9.5" fill="#9a9a9a"/><rect x="1.5" y="4" width="7" height="7.5" fill="#bdbdbd"/><path d="M4 2.5 H11" stroke="#1f1f1f" stroke-width="0.8"/></svg>
<div class="a" style="left:452px;top:489px;width:17px;height:15px;background:#4a4a4a;border-radius:3px"></div>
<svg class="a" style="left:453px;top:490px;" width="15" height="13" viewBox="0 0 15 13"><g transform="rotate(-40 7.5 6.5)"><rect x="0.8" y="2.8" width="13.4" height="7.4" rx="3.7" fill="#8a8a8a" stroke="#ddd" stroke-width="1"/><circle cx="10.3" cy="6.5" r="3" fill="#a0a0a0" stroke="#ddd" stroke-width="0.9"/><path d="M4 4.2 A3 3 0 0 0 4 8.8" fill="none" stroke="#ddd" stroke-width="0.8"/></g></svg>
<svg class="a" style="left:474px;top:490px;" width="14" height="13" viewBox="0 0 14 13"><rect x="0.5" y="1.5" width="13" height="11" fill="none" stroke="#d0d0d0" stroke-width="1"/><path d="M2 10 C6 10 7 4 12 4" fill="none" stroke="#d0d0d0" stroke-width="1"/><rect x="3" y="0" width="1" height="3" fill="#d0d0d0"/><rect x="10" y="0" width="1" height="3" fill="#d0d0d0"/></svg>
<div class="a" style="left:0px;top:509px;width:497px;height:17px;background:#1f1f1f;"></div>
<svg class="a" style="left:6px;top:515px;" width="10" height="7" viewBox="0 0 10 7"><path d="M0.5 3.5 Q5 -1 9.5 3.5 Q5 8 0.5 3.5 Z" fill="#d4d4d4"/><circle cx="5" cy="3.5" r="1.5" fill="#1f1f1f"/></svg>
<svg class="a" style="left:18px;top:514px;" width="11" height="10" viewBox="0 0 11 10"><path d="M0.5 3 H2.5 L5.5 0.5 V9.5 L2.5 7 H0.5 Z" fill="#d4d4d4"/><path d="M7 2.5 Q8.5 5 7 7.5 M8.8 1 Q11 5 8.8 9" fill="none" stroke="#d4d4d4" stroke-width="1"/></svg>
<svg class="a" style="left:31px;top:515px;" width="8" height="8" viewBox="0 0 8 8"><circle cx="4" cy="4" r="3.3" fill="#d4d4d4"/></svg>
<svg class="a" style="left:43px;top:513px;" width="9" height="11" viewBox="0 0 9 11"><path d="M2.2 5 V3.3 A2.3 2.3 0 0 1 6.8 3.3 V5" fill="none" stroke="#d4d4d4" stroke-width="1.2"/><rect x="0.5" y="5" width="8" height="5.5" fill="#d4d4d4"/><rect x="4" y="6.5" width="1.2" height="2.5" fill="#1f1f1f"/></svg>
<div class="a" style="left:57px;top:513px;width:1px;height:11px;background:#131313;"></div>
<svg class="a" style="left:67px;top:514px;" width="11" height="11" viewBox="0 0 11 11"><path d="M1 1 L5.5 1 L10.5 6 L6 10.5 L1 5.5 Z" fill="#d4d4d4"/><circle cx="3.3" cy="3.3" r="1" fill="#1f1f1f"/></svg>
<div class="a" style="left:83px;top:513px;width:1px;height:11px;background:#131313;"></div>
<div class="t" style="left:88px;top:516.57px;font-size:7px;color:#9a9a9a;font-weight:normal;">#</div>
<div class="a" style="left:110px;top:513px;width:1px;height:11px;background:#131313;"></div>
<div class="t" style="left:113.75px;top:515.73px;font-size:8px;color:#c8c8c8;font-weight:normal;">Source Name</div>
<div class="a" style="left:275px;top:513px;width:1px;height:11px;background:#131313;"></div>
<svg class="a" style="left:279px;top:513px;" width="11" height="10" viewBox="0 0 11 10"><path d="M1.5 5 A4 4 0 0 1 9.5 5 Z" fill="#d4d4d4"/><rect x="4.5" y="5" width="2" height="3" fill="#d4d4d4"/><rect x="0" y="7" width="11" height="1.2" fill="#d4d4d4"/><path d="M3.5 3 V5 M7.5 3 V5" stroke="#1f1f1f" stroke-width="0.8"/></svg>
<svg class="a" style="left:292px;top:514px;" width="9" height="9" viewBox="0 0 9 9"><circle cx="4.5" cy="4.5" r="2" fill="#d4d4d4"/><path d="M4.5 0 V9 M0 4.5 H9 M1.3 1.3 L7.7 7.7 M7.7 1.3 L1.3 7.7" stroke="#d4d4d4" stroke-width="0.8"/></svg>
<svg class="a" style="left:303px;top:513px;" width="10" height="10" viewBox="0 0 10 10"><path d="M0.5 0.5 L9.5 9.5" stroke="#d4d4d4" stroke-width="1.2"/></svg>
<div class="t" style="left:316px;top:514.88px;font-size:9px;color:#c8c8c8;font-weight:normal;font-family:"Liberation Serif",serif"><i>fx</i></div>
<svg class="a" style="left:327px;top:512px;" width="12" height="12" viewBox="0 0 12 12"><rect x="0.5" y="0.5" width="11" height="11" fill="#c8c8c8"/><rect x="3" y="3" width="6" height="2" fill="#7a7a7a"/><rect x="0.5" y="8" width="11" height="3.5" fill="#9a9a9a"/></svg>
<svg class="a" style="left:340px;top:512px;" width="12" height="12" viewBox="0 0 12 12"><g transform="rotate(-45 6 6)"><rect x="0.3" y="2.8" width="11.4" height="6.4" rx="3.2" fill="#7a7a7a" stroke="#d0d0d0" stroke-width="0.9"/><circle cx="8.4" cy="6" r="2.6" fill="#9a9a9a" stroke="#d0d0d0" stroke-width="0.8"/></g></svg>
<svg class="a" style="left:353px;top:513px;" width="10" height="10" viewBox="0 0 10 10"><circle cx="5" cy="5" r="4.3" fill="none" stroke="#d4d4d4" stroke-width="1"/><path d="M5 0.7 A4.3 4.3 0 0 1 5 9.3 Z" fill="#d4d4d4" transform="rotate(45 5 5)"/></svg>
<svg class="a" style="left:366px;top:513px;" width="10" height="10" viewBox="0 0 10 10"><path d="M5 0.8 L9 3 V7 L5 9.2 L1 7 V3 Z M1 3 L5 5 L9 3 M5 5 V9.2" fill="none" stroke="#d4d4d4" stroke-width="0.9"/></svg>
<div class="a" style="left:385px;top:513px;width:1px;height:11px;background:#131313;"></div>
<div class="t" style="left:393.6px;top:515.73px;font-size:8px;color:#c8c8c8;font-weight:normal;">Parent &amp; Link</div>
<div class="a" style="left:483px;top:513px;width:1px;height:11px;background:#131313;"></div>
<div class="a" style="left:0;top:526px;width:1200px;height:163px;overflow:hidden">
<div class="a" style="left:0px;top:-0.80px;width:1184px;height:1.6px;background:#181818;"></div>
<div class="a" style="left:2px;top:0.60px;width:495.6px;height:12.5px;background:#4a4a4a;"></div>
<div class="a" style="left:5px;top:1.10px;width:10.5px;height:11.5px;background:#111;"></div>
<svg class="a" style="left:5px;top:3.10px" width="11" height="8" viewBox="0 0 11 8"><path d="M0.8 4 Q5.5 -0.8 10.2 4 Q5.5 8.8 0.8 4 Z" fill="#e8e8e8"/><circle cx="5.5" cy="4" r="1.7" fill="#111"/></svg>
<div class="a" style="left:30px;top:1.10px;width:10px;height:11.5px;background:#111;"></div>
<div class="a" style="left:42px;top:1.10px;width:10px;height:11.5px;background:#111;"></div>
<svg class="a" style="left:60px;top:2.60px" width="6" height="9" viewBox="0 0 6 9"><path d="M1.2 1 L4.5 4.5 L1.2 8" fill="none" stroke="#c8c8c8" stroke-width="1.2"/></svg>
<div class="a" style="left:71px;top:1.80px;width:10px;height:10px;background:#c8413f;"></div>
<div class="t" style="left:88px;top:3.00px;font-size:8.5px;color:#c8c8c8;">86</div>
<div class="t" style="left:114px;top:2.13px;font-size:10px;color:#d0d0d0;font-family:"Liberation Serif",serif">T</div>
<div class="a" style="left:125px;top:0.60px;width:149.5px;height:12.5px;background:#c4c4c4;"></div>
<div class="t" style="left:127.5px;top:2.75px;font-size:8.8px;color:#242424;max-width:146px;overflow:hidden">Send</div>
<div class="a" style="left:278px;top:1.10px;width:12px;height:11.5px;background:#151515;"></div>
<svg class="a" style="left:279px;top:2.60px" width="11" height="9" viewBox="0 0 11 9"><path d="M3 5 A2.5 2.2 0 0 1 8 5 Z" fill="#e0e0e0"/><rect x="0.5" y="5.5" width="10" height="1.2" fill="#e0e0e0"/><rect x="1.5" y="7.6" width="8" height="0.8" fill="#888"/></svg>
<div class="a" style="left:291px;top:1.10px;width:10px;height:11.5px;background:#3a3a3a;"></div>
<svg class="a" style="left:292px;top:2.60px" width="9" height="9" viewBox="0 0 9 9"><circle cx="4.5" cy="4.5" r="2.2" fill="none" stroke="#6a6a6a" stroke-width="1"/><path d="M4.5 0 V2 M4.5 7 V9 M0 4.5 H2 M7 4.5 H9 M1.3 1.3 L2.6 2.6 M7.7 1.3 L6.4 2.6 M1.3 7.7 L2.6 6.4 M7.7 7.7 L6.4 6.4" stroke="#6a6a6a" stroke-width="1"/></svg>
<div class="a" style="left:302px;top:1.10px;width:11px;height:11.5px;background:#111;"></div>
<svg class="a" style="left:303px;top:2.10px" width="10" height="10" viewBox="0 0 10 10"><path d="M1 9 L9 1" stroke="#e0e0e0" stroke-width="1.1"/></svg>
<svg class="a" style="left:340px;top:1.10px" width="12" height="12" viewBox="0 0 12 12"><g transform="rotate(-45 6 6)"><rect x="0.3" y="2.8" width="11.4" height="6.4" rx="3.2" fill="#7a7a7a" stroke="#d0d0d0" stroke-width="0.9"/><circle cx="8.4" cy="6" r="2.6" fill="#9a9a9a" stroke="#d0d0d0" stroke-width="0.8"/><path d="M3 4 A2.5 2.5 0 0 0 3 8" fill="none" stroke="#d0d0d0" stroke-width="0.7"/></g></svg>
<div class="a" style="left:352px;top:1.10px;width:10px;height:11.5px;background:#111;"></div>
<div class="a" style="left:364.4px;top:1.10px;width:10px;height:11.5px;background:#111;"></div>
<svg class="a" style="left:393px;top:1.10px" width="11" height="12" viewBox="0 0 11 12"><path d="M5.8 6 a0.8 0.8 0 1 1 -1.2 -0.8 a1.8 1.8 0 1 1 -0.5 2.8 a2.8 2.8 0 1 1 4.6 -3.4 a3.8 3.8 0 1 1 -6.2 4.6" fill="none" stroke="#c0c0c0" stroke-width="0.9"/></svg>
<div class="a" style="left:408px;top:1.10px;width:72px;height:11.5px;background:#111;border-radius:2px"></div>
<div class="t" style="left:414.4px;top:2.90px;font-size:8.5px;color:#d8d8d8;width:50px;overflow:hidden">87. Send Bu</div>
<svg class="a" style="left:466px;top:3.60px" width="9" height="6" viewBox="0 0 9 6"><path d="M1 1 L4.5 4.5 L8 1" fill="none" stroke="#e0e0e0" stroke-width="1.3"/></svg>
<div class="a" style="left:497.6px;top:0.60px;width:5.4px;height:12.5px;background:#4c4c4c;"></div>
<div class="a" style="left:503px;top:0.60px;width:681px;height:12.5px;background:#4c4c4c;"></div>
<div class="a" style="left:503px;top:0.60px;width:606px;height:12.5px;background:#b0504c;box-shadow:inset 0 1px 0 rgba(255,255,255,0.25)"></div>
<div class="a" style="left:0px;top:13.00px;width:1184px;height:1.6px;background:#181818;"></div>
<div class="a" style="left:2px;top:14.40px;width:495.6px;height:12.5px;background:#4a4a4a;"></div>
<div class="a" style="left:5px;top:14.90px;width:10.5px;height:11.5px;background:#111;"></div>
<svg class="a" style="left:5px;top:16.90px" width="11" height="8" viewBox="0 0 11 8"><path d="M0.8 4 Q5.5 -0.8 10.2 4 Q5.5 8.8 0.8 4 Z" fill="#e8e8e8"/><circle cx="5.5" cy="4" r="1.7" fill="#111"/></svg>
<div class="a" style="left:30px;top:14.90px;width:10px;height:11.5px;background:#111;"></div>
<div class="a" style="left:42px;top:14.90px;width:10px;height:11.5px;background:#111;"></div>
<svg class="a" style="left:60px;top:16.40px" width="6" height="9" viewBox="0 0 6 9"><path d="M1.2 1 L4.5 4.5 L1.2 8" fill="none" stroke="#c8c8c8" stroke-width="1.2"/></svg>
<div class="a" style="left:71px;top:15.60px;width:10px;height:10px;background:#6f86e8;"></div>
<div class="t" style="left:88px;top:16.80px;font-size:8.5px;color:#c8c8c8;">87</div>
<svg class="a" style="left:113px;top:15.90px" width="9" height="9" viewBox="0 0 9 9"><path d="M4.5 0.3 L5.6 3.3 L8.8 3.4 L6.3 5.3 L7.2 8.5 L4.5 6.7 L1.8 8.5 L2.7 5.3 L0.2 3.4 L3.4 3.3 Z" fill="#d8d8d8"/></svg>
<div class="a" style="left:125px;top:14.40px;width:149.5px;height:12.5px;background:#c4c4c4;"></div>
<div class="t" style="left:127.5px;top:16.55px;font-size:8.8px;color:#242424;max-width:146px;overflow:hidden">Send Button</div>
<div class="a" style="left:278px;top:14.90px;width:12px;height:11.5px;background:#151515;"></div>
<svg class="a" style="left:279px;top:16.40px" width="11" height="9" viewBox="0 0 11 9"><path d="M3 5 A2.5 2.2 0 0 1 8 5 Z" fill="#e0e0e0"/><rect x="0.5" y="5.5" width="10" height="1.2" fill="#e0e0e0"/><rect x="1.5" y="7.6" width="8" height="0.8" fill="#888"/></svg>
<div class="a" style="left:291px;top:14.90px;width:10px;height:11.5px;background:#3a3a3a;"></div>
<svg class="a" style="left:292px;top:16.40px" width="9" height="9" viewBox="0 0 9 9"><circle cx="4.5" cy="4.5" r="2.2" fill="none" stroke="#6a6a6a" stroke-width="1"/><path d="M4.5 0 V2 M4.5 7 V9 M0 4.5 H2 M7 4.5 H9 M1.3 1.3 L2.6 2.6 M7.7 1.3 L6.4 2.6 M1.3 7.7 L2.6 6.4 M7.7 7.7 L6.4 6.4" stroke="#6a6a6a" stroke-width="1"/></svg>
<div class="a" style="left:302px;top:14.90px;width:11px;height:11.5px;background:#111;"></div>
<svg class="a" style="left:303px;top:15.90px" width="10" height="10" viewBox="0 0 10 10"><path d="M1 9 L9 1" stroke="#e0e0e0" stroke-width="1.1"/></svg>
<svg class="a" style="left:340px;top:14.90px" width="12" height="12" viewBox="0 0 12 12"><g transform="rotate(-45 6 6)"><rect x="0.3" y="2.8" width="11.4" height="6.4" rx="3.2" fill="#7a7a7a" stroke="#d0d0d0" stroke-width="0.9"/><circle cx="8.4" cy="6" r="2.6" fill="#9a9a9a" stroke="#d0d0d0" stroke-width="0.8"/><path d="M3 4 A2.5 2.5 0 0 0 3 8" fill="none" stroke="#d0d0d0" stroke-width="0.7"/></g></svg>
<div class="a" style="left:352px;top:14.90px;width:10px;height:11.5px;background:#111;"></div>
<div class="a" style="left:364.4px;top:14.90px;width:10px;height:11.5px;background:#111;"></div>
<svg class="a" style="left:393px;top:14.90px" width="11" height="12" viewBox="0 0 11 12"><path d="M5.8 6 a0.8 0.8 0 1 1 -1.2 -0.8 a1.8 1.8 0 1 1 -0.5 2.8 a2.8 2.8 0 1 1 4.6 -3.4 a3.8 3.8 0 1 1 -6.2 4.6" fill="none" stroke="#c0c0c0" stroke-width="0.9"/></svg>
<div class="a" style="left:408px;top:14.90px;width:72px;height:11.5px;background:#111;border-radius:2px"></div>
<div class="t" style="left:414.4px;top:16.70px;font-size:8.5px;color:#d8d8d8;width:50px;overflow:hidden">None</div>
<svg class="a" style="left:466px;top:17.40px" width="9" height="6" viewBox="0 0 9 6"><path d="M1 1 L4.5 4.5 L8 1" fill="none" stroke="#e0e0e0" stroke-width="1.3"/></svg>
<div class="a" style="left:497.6px;top:14.40px;width:5.4px;height:12.5px;background:#4c4c4c;"></div>
<div class="a" style="left:503px;top:14.40px;width:681px;height:12.5px;background:#4c4c4c;"></div>
<div class="a" style="left:503px;top:14.40px;width:576px;height:12.5px;background:#5a6fd8;box-shadow:inset 0 1px 0 rgba(255,255,255,0.25)"></div>
<div class="a" style="left:0px;top:26.80px;width:1184px;height:1.6px;background:#181818;"></div>
<div class="a" style="left:2px;top:28.20px;width:495.6px;height:12.5px;background:#4a4a4a;"></div>
<div class="a" style="left:5px;top:28.70px;width:10.5px;height:11.5px;background:#111;"></div>
<svg class="a" style="left:5px;top:30.70px" width="11" height="8" viewBox="0 0 11 8"><path d="M0.8 4 Q5.5 -0.8 10.2 4 Q5.5 8.8 0.8 4 Z" fill="#e8e8e8"/><circle cx="5.5" cy="4" r="1.7" fill="#111"/></svg>
<div class="a" style="left:30px;top:28.70px;width:10px;height:11.5px;background:#111;"></div>
<div class="a" style="left:42px;top:28.70px;width:10px;height:11.5px;background:#111;"></div>
<svg class="a" style="left:60px;top:30.20px" width="6" height="9" viewBox="0 0 6 9"><path d="M1.2 1 L4.5 4.5 L1.2 8" fill="none" stroke="#c8c8c8" stroke-width="1.2"/></svg>
<div class="a" style="left:71px;top:29.40px;width:10px;height:10px;background:#e8c4a0;"></div>
<div class="t" style="left:88px;top:30.60px;font-size:8.5px;color:#c8c8c8;">88</div>
<div class="t" style="left:114px;top:29.74px;font-size:10px;color:#d0d0d0;font-family:"Liberation Serif",serif">T</div>
<div class="a" style="left:125px;top:28.20px;width:149.5px;height:12.5px;background:#c4c4c4;"></div>
<div class="t" style="left:127.5px;top:30.35px;font-size:8.8px;color:#242424;max-width:146px;overflow:hidden">myproject@operator.link</div>
<div class="a" style="left:278px;top:28.70px;width:12px;height:11.5px;background:#151515;"></div>
<svg class="a" style="left:279px;top:30.20px" width="11" height="9" viewBox="0 0 11 9"><path d="M3 5 A2.5 2.2 0 0 1 8 5 Z" fill="#e0e0e0"/><rect x="0.5" y="5.5" width="10" height="1.2" fill="#e0e0e0"/><rect x="1.5" y="7.6" width="8" height="0.8" fill="#888"/></svg>
<div class="a" style="left:291px;top:28.70px;width:10px;height:11.5px;background:#3a3a3a;"></div>
<svg class="a" style="left:292px;top:30.20px" width="9" height="9" viewBox="0 0 9 9"><circle cx="4.5" cy="4.5" r="2.2" fill="none" stroke="#6a6a6a" stroke-width="1"/><path d="M4.5 0 V2 M4.5 7 V9 M0 4.5 H2 M7 4.5 H9 M1.3 1.3 L2.6 2.6 M7.7 1.3 L6.4 2.6 M1.3 7.7 L2.6 6.4 M7.7 7.7 L6.4 6.4" stroke="#6a6a6a" stroke-width="1"/></svg>
<div class="a" style="left:302px;top:28.70px;width:11px;height:11.5px;background:#111;"></div>
<svg class="a" style="left:303px;top:29.70px" width="10" height="10" viewBox="0 0 10 10"><path d="M1 9 L9 1" stroke="#e0e0e0" stroke-width="1.1"/></svg>
<svg class="a" style="left:340px;top:28.70px" width="12" height="12" viewBox="0 0 12 12"><g transform="rotate(-45 6 6)"><rect x="0.3" y="2.8" width="11.4" height="6.4" rx="3.2" fill="#7a7a7a" stroke="#d0d0d0" stroke-width="0.9"/><circle cx="8.4" cy="6" r="2.6" fill="#9a9a9a" stroke="#d0d0d0" stroke-width="0.8"/><path d="M3 4 A2.5 2.5 0 0 0 3 8" fill="none" stroke="#d0d0d0" stroke-width="0.7"/></g></svg>
<div class="a" style="left:352px;top:28.70px;width:10px;height:11.5px;background:#111;"></div>
<div class="a" style="left:364.4px;top:28.70px;width:10px;height:11.5px;background:#111;"></div>
<svg class="a" style="left:393px;top:28.70px" width="11" height="12" viewBox="0 0 11 12"><path d="M5.8 6 a0.8 0.8 0 1 1 -1.2 -0.8 a1.8 1.8 0 1 1 -0.5 2.8 a2.8 2.8 0 1 1 4.6 -3.4 a3.8 3.8 0 1 1 -6.2 4.6" fill="none" stroke="#c0c0c0" stroke-width="0.9"/></svg>
<div class="a" style="left:408px;top:28.70px;width:72px;height:11.5px;background:#111;border-radius:2px"></div>
<div class="t" style="left:414.4px;top:30.50px;font-size:8.5px;color:#d8d8d8;width:50px;overflow:hidden">92. Blue Op</div>
<svg class="a" style="left:466px;top:31.20px" width="9" height="6" viewBox="0 0 9 6"><path d="M1 1 L4.5 4.5 L8 1" fill="none" stroke="#e0e0e0" stroke-width="1.3"/></svg>
<div class="a" style="left:497.6px;top:28.20px;width:5.4px;height:12.5px;background:#4c4c4c;"></div>
<div class="a" style="left:503px;top:28.20px;width:681px;height:12.5px;background:#4c4c4c;"></div>
<div class="a" style="left:503px;top:28.20px;width:180px;height:12.5px;background:#d8b08a;box-shadow:inset 0 1px 0 rgba(255,255,255,0.25)"></div>
<div class="a" style="left:0px;top:40.60px;width:1184px;height:1.6px;background:#181818;"></div>
<div class="a" style="left:2px;top:42.00px;width:495.6px;height:12.5px;background:#333333;"></div>
<div class="a" style="left:5px;top:42.50px;width:10.5px;height:11.5px;background:#111;"></div>
<svg class="a" style="left:5px;top:44.50px" width="11" height="8" viewBox="0 0 11 8"><path d="M0.8 4 Q5.5 -0.8 10.2 4 Q5.5 8.8 0.8 4 Z" fill="#e8e8e8"/><circle cx="5.5" cy="4" r="1.7" fill="#111"/></svg>
<div class="a" style="left:30px;top:42.50px;width:10px;height:11.5px;background:#111;"></div>
<div class="a" style="left:42px;top:42.50px;width:10px;height:11.5px;background:#111;"></div>
<svg class="a" style="left:60px;top:44.00px" width="6" height="9" viewBox="0 0 6 9"><path d="M1.2 1 L4.5 4.5 L1.2 8" fill="none" stroke="#c8c8c8" stroke-width="1.2"/></svg>
<div class="a" style="left:71px;top:43.20px;width:10px;height:10px;background:#e8c4a0;"></div>
<div class="t" style="left:88px;top:44.40px;font-size:8.5px;color:#c0c0c0;">89</div>
<svg class="a" style="left:113px;top:43.50px" width="9" height="9" viewBox="0 0 9 9"><path d="M4.5 0.3 L5.6 3.3 L8.8 3.4 L6.3 5.3 L7.2 8.5 L4.5 6.7 L1.8 8.5 L2.7 5.3 L0.2 3.4 L3.4 3.3 Z" fill="#d8d8d8"/></svg>
<div class="t" style="left:127.5px;top:44.15px;font-size:8.8px;color:#c8c8c8;max-width:146px;overflow:hidden">Blue Operator Background 3</div>
<div class="a" style="left:278px;top:42.50px;width:12px;height:11.5px;background:#151515;"></div>
<svg class="a" style="left:279px;top:44.00px" width="11" height="9" viewBox="0 0 11 9"><path d="M3 5 A2.5 2.2 0 0 1 8 5 Z" fill="#e0e0e0"/><rect x="0.5" y="5.5" width="10" height="1.2" fill="#e0e0e0"/><rect x="1.5" y="7.6" width="8" height="0.8" fill="#888"/></svg>
<div class="a" style="left:291px;top:42.50px;width:10px;height:11.5px;background:#2c2c2c;"></div>
<svg class="a" style="left:292px;top:44.00px" width="9" height="9" viewBox="0 0 9 9"><circle cx="4.5" cy="4.5" r="2.2" fill="none" stroke="#6a6a6a" stroke-width="1"/><path d="M4.5 0 V2 M4.5 7 V9 M0 4.5 H2 M7 4.5 H9 M1.3 1.3 L2.6 2.6 M7.7 1.3 L6.4 2.6 M1.3 7.7 L2.6 6.4 M7.7 7.7 L6.4 6.4" stroke="#6a6a6a" stroke-width="1"/></svg>
<div class="a" style="left:302px;top:42.50px;width:11px;height:11.5px;background:#111;"></div>
<svg class="a" style="left:303px;top:43.50px" width="10" height="10" viewBox="0 0 10 10"><path d="M1 9 L9 1" stroke="#e0e0e0" stroke-width="1.1"/></svg>
<svg class="a" style="left:340px;top:42.50px" width="12" height="12" viewBox="0 0 12 12"><g transform="rotate(-45 6 6)"><rect x="0.3" y="2.8" width="11.4" height="6.4" rx="3.2" fill="#7a7a7a" stroke="#d0d0d0" stroke-width="0.9"/><circle cx="8.4" cy="6" r="2.6" fill="#9a9a9a" stroke="#d0d0d0" stroke-width="0.8"/><path d="M3 4 A2.5 2.5 0 0 0 3 8" fill="none" stroke="#d0d0d0" stroke-width="0.7"/></g></svg>
<div class="a" style="left:352px;top:42.50px;width:10px;height:11.5px;background:#111;"></div>
<div class="a" style="left:364.4px;top:42.50px;width:10px;height:11.5px;background:#111;"></div>
<svg class="a" style="left:393px;top:42.50px" width="11" height="12" viewBox="0 0 11 12"><path d="M5.8 6 a0.8 0.8 0 1 1 -1.2 -0.8 a1.8 1.8 0 1 1 -0.5 2.8 a2.8 2.8 0 1 1 4.6 -3.4 a3.8 3.8 0 1 1 -6.2 4.6" fill="none" stroke="#c0c0c0" stroke-width="0.9"/></svg>
<div class="a" style="left:408px;top:42.50px;width:72px;height:11.5px;background:#111;border-radius:2px"></div>
<div class="t" style="left:414.4px;top:44.30px;font-size:8.5px;color:#d8d8d8;width:50px;overflow:hidden">None</div>
<svg class="a" style="left:466px;top:45.00px" width="9" height="6" viewBox="0 0 9 6"><path d="M1 1 L4.5 4.5 L8 1" fill="none" stroke="#e0e0e0" stroke-width="1.3"/></svg>
<div class="a" style="left:497.6px;top:42.00px;width:5.4px;height:12.5px;background:#313131;"></div>
<div class="a" style="left:503px;top:42.00px;width:681px;height:12.5px;background:#313131;"></div>
<div class="a" style="left:813px;top:42.00px;width:283px;height:12.5px;background:#9c8a76;box-shadow:inset 0 1px 0 rgba(255,255,255,0.25)"></div>
<div class="a" style="left:0px;top:54.40px;width:1184px;height:1.6px;background:#181818;"></div>
<div class="a" style="left:2px;top:55.80px;width:495.6px;height:12.5px;background:#333333;"></div>
<div class="a" style="left:5px;top:56.30px;width:10.5px;height:11.5px;background:#111;"></div>
<svg class="a" style="left:5px;top:58.30px" width="11" height="8" viewBox="0 0 11 8"><path d="M0.8 4 Q5.5 -0.8 10.2 4 Q5.5 8.8 0.8 4 Z" fill="#e8e8e8"/><circle cx="5.5" cy="4" r="1.7" fill="#111"/></svg>
<div class="a" style="left:30px;top:56.30px;width:10px;height:11.5px;background:#111;"></div>
<div class="a" style="left:42px;top:56.30px;width:10px;height:11.5px;background:#111;"></div>
<svg class="a" style="left:60px;top:57.80px" width="6" height="9" viewBox="0 0 6 9"><path d="M1.2 1 L4.5 4.5 L1.2 8" fill="none" stroke="#c8c8c8" stroke-width="1.2"/></svg>
<div class="a" style="left:71px;top:57.00px;width:10px;height:10px;background:#6f86e8;"></div>
<div class="t" style="left:88px;top:58.20px;font-size:8.5px;color:#c0c0c0;">90</div>
<svg class="a" style="left:113px;top:57.30px" width="9" height="9" viewBox="0 0 9 9"><path d="M4.5 0.3 L5.6 3.3 L8.8 3.4 L6.3 5.3 L7.2 8.5 L4.5 6.7 L1.8 8.5 L2.7 5.3 L0.2 3.4 L3.4 3.3 Z" fill="#d8d8d8"/></svg>
<div class="t" style="left:127.5px;top:57.95px;font-size:8.8px;color:#c8c8c8;max-width:146px;overflow:hidden">Email Background Container 4</div>
<div class="a" style="left:278px;top:56.30px;width:12px;height:11.5px;background:#333333;"></div>
<svg class="a" style="left:279px;top:56.80px" width="11" height="10" viewBox="0 0 11 10"><path d="M1.5 5 A4 4 0 0 1 9.5 5 Z" fill="#e8e8e8"/><rect x="4.5" y="5" width="2" height="3" fill="#e8e8e8"/><rect x="0" y="7.5" width="11" height="1.2" fill="#e8e8e8"/><path d="M3.5 2.5 V5 M7.5 2.5 V5" stroke="#333" stroke-width="0.8"/></svg>
<div class="a" style="left:291px;top:56.30px;width:10px;height:11.5px;background:#2c2c2c;"></div>
<svg class="a" style="left:292px;top:57.80px" width="9" height="9" viewBox="0 0 9 9"><circle cx="4.5" cy="4.5" r="2.2" fill="none" stroke="#6a6a6a" stroke-width="1"/><path d="M4.5 0 V2 M4.5 7 V9 M0 4.5 H2 M7 4.5 H9 M1.3 1.3 L2.6 2.6 M7.7 1.3 L6.4 2.6 M1.3 7.7 L2.6 6.4 M7.7 7.7 L6.4 6.4" stroke="#6a6a6a" stroke-width="1"/></svg>
<div class="a" style="left:302px;top:56.30px;width:11px;height:11.5px;background:#111;"></div>
<svg class="a" style="left:303px;top:57.30px" width="10" height="10" viewBox="0 0 10 10"><path d="M1 9 L9 1" stroke="#e0e0e0" stroke-width="1.1"/></svg>
<svg class="a" style="left:340px;top:56.30px" width="12" height="12" viewBox="0 0 12 12"><g transform="rotate(-45 6 6)"><rect x="0.3" y="2.8" width="11.4" height="6.4" rx="3.2" fill="#7a7a7a" stroke="#d0d0d0" stroke-width="0.9"/><circle cx="8.4" cy="6" r="2.6" fill="#9a9a9a" stroke="#d0d0d0" stroke-width="0.8"/><path d="M3 4 A2.5 2.5 0 0 0 3 8" fill="none" stroke="#d0d0d0" stroke-width="0.7"/></g></svg>
<div class="a" style="left:352px;top:56.30px;width:10px;height:11.5px;background:#111;"></div>
<div class="a" style="left:364.4px;top:56.30px;width:10px;height:11.5px;background:#111;"></div>
<svg class="a" style="left:393px;top:56.30px" width="11" height="12" viewBox="0 0 11 12"><path d="M5.8 6 a0.8 0.8 0 1 1 -1.2 -0.8 a1.8 1.8 0 1 1 -0.5 2.8 a2.8 2.8 0 1 1 4.6 -3.4 a3.8 3.8 0 1 1 -6.2 4.6" fill="none" stroke="#c0c0c0" stroke-width="0.9"/></svg>
<div class="a" style="left:408px;top:56.30px;width:72px;height:11.5px;background:#111;border-radius:2px"></div>
<div class="t" style="left:414.4px;top:58.10px;font-size:8.5px;color:#d8d8d8;width:50px;overflow:hidden">None</div>
<svg class="a" style="left:466px;top:58.80px" width="9" height="6" viewBox="0 0 9 6"><path d="M1 1 L4.5 4.5 L8 1" fill="none" stroke="#e0e0e0" stroke-width="1.3"/></svg>
<div class="a" style="left:497.6px;top:55.80px;width:5.4px;height:12.5px;background:#313131;"></div>
<div class="a" style="left:503px;top:55.80px;width:681px;height:12.5px;background:#313131;"></div>
<div class="a" style="left:813px;top:55.80px;width:307px;height:12.5px;background:#56619c;box-shadow:inset 0 1px 0 rgba(255,255,255,0.25)"></div>
<div class="a" style="left:0px;top:68.20px;width:1184px;height:1.6px;background:#181818;"></div>
<div class="a" style="left:2px;top:69.60px;width:495.6px;height:12.5px;background:#333333;"></div>
<div class="a" style="left:5px;top:70.10px;width:10.5px;height:11.5px;background:#111;"></div>
<svg class="a" style="left:5px;top:72.10px" width="11" height="8" viewBox="0 0 11 8"><path d="M0.8 4 Q5.5 -0.8 10.2 4 Q5.5 8.8 0.8 4 Z" fill="#e8e8e8"/><circle cx="5.5" cy="4" r="1.7" fill="#111"/></svg>
<div class="a" style="left:30px;top:70.10px;width:10px;height:11.5px;background:#111;"></div>
<div class="a" style="left:42px;top:70.10px;width:10px;height:11.5px;background:#111;"></div>
<svg class="a" style="left:60px;top:71.60px" width="6" height="9" viewBox="0 0 6 9"><path d="M1.2 1 L4.5 4.5 L1.2 8" fill="none" stroke="#c8c8c8" stroke-width="1.2"/></svg>
<div class="a" style="left:71px;top:70.80px;width:10px;height:10px;background:#e8c4a0;"></div>
<div class="t" style="left:88px;top:72.00px;font-size:8.5px;color:#c0c0c0;">91</div>
<svg class="a" style="left:113px;top:71.10px" width="9" height="9" viewBox="0 0 9 9"><path d="M4.5 0.3 L5.6 3.3 L8.8 3.4 L6.3 5.3 L7.2 8.5 L4.5 6.7 L1.8 8.5 L2.7 5.3 L0.2 3.4 L3.4 3.3 Z" fill="#d8d8d8"/></svg>
<div class="t" style="left:127.5px;top:71.75px;font-size:8.8px;color:#c8c8c8;max-width:146px;overflow:hidden">Blue Operator Background 2</div>
<div class="a" style="left:278px;top:70.10px;width:12px;height:11.5px;background:#333333;"></div>
<svg class="a" style="left:279px;top:70.60px" width="11" height="10" viewBox="0 0 11 10"><path d="M1.5 5 A4 4 0 0 1 9.5 5 Z" fill="#e8e8e8"/><rect x="4.5" y="5" width="2" height="3" fill="#e8e8e8"/><rect x="0" y="7.5" width="11" height="1.2" fill="#e8e8e8"/><path d="M3.5 2.5 V5 M7.5 2.5 V5" stroke="#333" stroke-width="0.8"/></svg>
<div class="a" style="left:291px;top:70.10px;width:10px;height:11.5px;background:#2c2c2c;"></div>
<svg class="a" style="left:292px;top:71.60px" width="9" height="9" viewBox="0 0 9 9"><circle cx="4.5" cy="4.5" r="2.2" fill="none" stroke="#6a6a6a" stroke-width="1"/><path d="M4.5 0 V2 M4.5 7 V9 M0 4.5 H2 M7 4.5 H9 M1.3 1.3 L2.6 2.6 M7.7 1.3 L6.4 2.6 M1.3 7.7 L2.6 6.4 M7.7 7.7 L6.4 6.4" stroke="#6a6a6a" stroke-width="1"/></svg>
<div class="a" style="left:302px;top:70.10px;width:11px;height:11.5px;background:#111;"></div>
<svg class="a" style="left:303px;top:71.10px" width="10" height="10" viewBox="0 0 10 10"><path d="M1 9 L9 1" stroke="#e0e0e0" stroke-width="1.1"/></svg>
<svg class="a" style="left:340px;top:70.10px" width="12" height="12" viewBox="0 0 12 12"><g transform="rotate(-45 6 6)"><rect x="0.3" y="2.8" width="11.4" height="6.4" rx="3.2" fill="#7a7a7a" stroke="#d0d0d0" stroke-width="0.9"/><circle cx="8.4" cy="6" r="2.6" fill="#9a9a9a" stroke="#d0d0d0" stroke-width="0.8"/><path d="M3 4 A2.5 2.5 0 0 0 3 8" fill="none" stroke="#d0d0d0" stroke-width="0.7"/></g></svg>
<div class="a" style="left:352px;top:70.10px;width:10px;height:11.5px;background:#111;"></div>
<div class="a" style="left:364.4px;top:70.10px;width:10px;height:11.5px;background:#111;"></div>
<svg class="a" style="left:393px;top:70.10px" width="11" height="12" viewBox="0 0 11 12"><path d="M5.8 6 a0.8 0.8 0 1 1 -1.2 -0.8 a1.8 1.8 0 1 1 -0.5 2.8 a2.8 2.8 0 1 1 4.6 -3.4 a3.8 3.8 0 1 1 -6.2 4.6" fill="none" stroke="#c0c0c0" stroke-width="0.9"/></svg>
<div class="a" style="left:408px;top:70.10px;width:72px;height:11.5px;background:#111;border-radius:2px"></div>
<div class="t" style="left:414.4px;top:71.90px;font-size:8.5px;color:#d8d8d8;width:50px;overflow:hidden">None</div>
<svg class="a" style="left:466px;top:72.60px" width="9" height="6" viewBox="0 0 9 6"><path d="M1 1 L4.5 4.5 L8 1" fill="none" stroke="#e0e0e0" stroke-width="1.3"/></svg>
<div class="a" style="left:497.6px;top:69.60px;width:5.4px;height:12.5px;background:#313131;"></div>
<div class="a" style="left:503px;top:69.60px;width:681px;height:12.5px;background:#313131;"></div>
<div class="a" style="left:656px;top:69.60px;width:157px;height:12.5px;background:#9c8a76;box-shadow:inset 0 1px 0 rgba(255,255,255,0.25)"></div>
<div class="a" style="left:0px;top:82.00px;width:1184px;height:1.6px;background:#181818;"></div>
<div class="a" style="left:2px;top:83.40px;width:495.6px;height:12.5px;background:#4a4a4a;"></div>
<div class="a" style="left:5px;top:83.90px;width:10.5px;height:11.5px;background:#111;"></div>
<svg class="a" style="left:5px;top:85.90px" width="11" height="8" viewBox="0 0 11 8"><path d="M0.8 4 Q5.5 -0.8 10.2 4 Q5.5 8.8 0.8 4 Z" fill="#e8e8e8"/><circle cx="5.5" cy="4" r="1.7" fill="#111"/></svg>
<div class="a" style="left:30px;top:83.90px;width:10px;height:11.5px;background:#111;"></div>
<div class="a" style="left:42px;top:83.90px;width:10px;height:11.5px;background:#111;"></div>
<svg class="a" style="left:60px;top:85.40px" width="6" height="9" viewBox="0 0 6 9"><path d="M1.2 1 L4.5 4.5 L1.2 8" fill="none" stroke="#c8c8c8" stroke-width="1.2"/></svg>
<div class="a" style="left:71px;top:84.60px;width:10px;height:10px;background:#e8c4a0;"></div>
<div class="t" style="left:88px;top:85.80px;font-size:8.5px;color:#c8c8c8;">92</div>
<svg class="a" style="left:113px;top:84.90px" width="9" height="9" viewBox="0 0 9 9"><path d="M4.5 0.3 L5.6 3.3 L8.8 3.4 L6.3 5.3 L7.2 8.5 L4.5 6.7 L1.8 8.5 L2.7 5.3 L0.2 3.4 L3.4 3.3 Z" fill="#d8d8d8"/></svg>
<div class="a" style="left:125px;top:83.40px;width:149.5px;height:12.5px;background:#c4c4c4;"></div>
<div class="t" style="left:127.5px;top:85.55px;font-size:8.8px;color:#242424;max-width:146px;overflow:hidden">Blue Operator Background</div>
<div class="a" style="left:278px;top:83.90px;width:12px;height:11.5px;background:#151515;"></div>
<svg class="a" style="left:279px;top:85.40px" width="11" height="9" viewBox="0 0 11 9"><path d="M3 5 A2.5 2.2 0 0 1 8 5 Z" fill="#e0e0e0"/><rect x="0.5" y="5.5" width="10" height="1.2" fill="#e0e0e0"/><rect x="1.5" y="7.6" width="8" height="0.8" fill="#888"/></svg>
<div class="a" style="left:291px;top:83.90px;width:10px;height:11.5px;background:#3a3a3a;"></div>
<svg class="a" style="left:292px;top:85.40px" width="9" height="9" viewBox="0 0 9 9"><circle cx="4.5" cy="4.5" r="2.2" fill="none" stroke="#6a6a6a" stroke-width="1"/><path d="M4.5 0 V2 M4.5 7 V9 M0 4.5 H2 M7 4.5 H9 M1.3 1.3 L2.6 2.6 M7.7 1.3 L6.4 2.6 M1.3 7.7 L2.6 6.4 M7.7 7.7 L6.4 6.4" stroke="#6a6a6a" stroke-width="1"/></svg>
<div class="a" style="left:302px;top:83.90px;width:11px;height:11.5px;background:#111;"></div>
<svg class="a" style="left:303px;top:84.90px" width="10" height="10" viewBox="0 0 10 10"><path d="M1 9 L9 1" stroke="#e0e0e0" stroke-width="1.1"/></svg>
<svg class="a" style="left:340px;top:83.90px" width="12" height="12" viewBox="0 0 12 12"><g transform="rotate(-45 6 6)"><rect x="0.3" y="2.8" width="11.4" height="6.4" rx="3.2" fill="#7a7a7a" stroke="#d0d0d0" stroke-width="0.9"/><circle cx="8.4" cy="6" r="2.6" fill="#9a9a9a" stroke="#d0d0d0" stroke-width="0.8"/><path d="M3 4 A2.5 2.5 0 0 0 3 8" fill="none" stroke="#d0d0d0" stroke-width="0.7"/></g></svg>
<div class="a" style="left:352px;top:83.90px;width:10px;height:11.5px;background:#111;"></div>
<div class="a" style="left:364.4px;top:83.90px;width:10px;height:11.5px;background:#111;"></div>
<svg class="a" style="left:393px;top:83.90px" width="11" height="12" viewBox="0 0 11 12"><path d="M5.8 6 a0.8 0.8 0 1 1 -1.2 -0.8 a1.8 1.8 0 1 1 -0.5 2.8 a2.8 2.8 0 1 1 4.6 -3.4 a3.8 3.8 0 1 1 -6.2 4.6" fill="none" stroke="#c0c0c0" stroke-width="0.9"/></svg>
<div class="a" style="left:408px;top:83.90px;width:72px;height:11.5px;background:#111;border-radius:2px"></div>
<div class="t" style="left:414.4px;top:85.70px;font-size:8.5px;color:#d8d8d8;width:50px;overflow:hidden">None</div>
<svg class="a" style="left:466px;top:86.40px" width="9" height="6" viewBox="0 0 9 6"><path d="M1 1 L4.5 4.5 L8 1" fill="none" stroke="#e0e0e0" stroke-width="1.3"/></svg>
<div class="a" style="left:497.6px;top:83.40px;width:5.4px;height:12.5px;background:#4c4c4c;"></div>
<div class="a" style="left:503px;top:83.40px;width:681px;height:12.5px;background:#4c4c4c;"></div>
<div class="a" style="left:503px;top:83.40px;width:153px;height:12.5px;background:#d8b08a;box-shadow:inset 0 1px 0 rgba(255,255,255,0.25)"></div>
<div class="a" style="left:0px;top:95.80px;width:1184px;height:1.6px;background:#181818;"></div>
<div class="a" style="left:2px;top:97.20px;width:495.6px;height:12.5px;background:#333333;"></div>
<div class="a" style="left:5px;top:97.70px;width:10.5px;height:11.5px;background:#111;"></div>
<svg class="a" style="left:5px;top:99.70px" width="11" height="8" viewBox="0 0 11 8"><path d="M0.8 4 Q5.5 -0.8 10.2 4 Q5.5 8.8 0.8 4 Z" fill="#e8e8e8"/><circle cx="5.5" cy="4" r="1.7" fill="#111"/></svg>
<div class="a" style="left:30px;top:97.70px;width:10px;height:11.5px;background:#111;"></div>
<div class="a" style="left:42px;top:97.70px;width:10px;height:11.5px;background:#111;"></div>
<svg class="a" style="left:60px;top:99.20px" width="6" height="9" viewBox="0 0 6 9"><path d="M1.2 1 L4.5 4.5 L1.2 8" fill="none" stroke="#c8c8c8" stroke-width="1.2"/></svg>
<div class="a" style="left:71px;top:98.40px;width:10px;height:10px;background:#6f86e8;"></div>
<div class="t" style="left:88px;top:99.60px;font-size:8.5px;color:#c0c0c0;">93</div>
<svg class="a" style="left:113px;top:98.70px" width="9" height="9" viewBox="0 0 9 9"><path d="M4.5 0.3 L5.6 3.3 L8.8 3.4 L6.3 5.3 L7.2 8.5 L4.5 6.7 L1.8 8.5 L2.7 5.3 L0.2 3.4 L3.4 3.3 Z" fill="#d8d8d8"/></svg>
<div class="t" style="left:127.5px;top:99.35px;font-size:8.8px;color:#c8c8c8;max-width:146px;overflow:hidden">Email Background Container 3</div>
<div class="a" style="left:278px;top:97.70px;width:12px;height:11.5px;background:#333333;"></div>
<svg class="a" style="left:279px;top:98.20px" width="11" height="10" viewBox="0 0 11 10"><path d="M1.5 5 A4 4 0 0 1 9.5 5 Z" fill="#e8e8e8"/><rect x="4.5" y="5" width="2" height="3" fill="#e8e8e8"/><rect x="0" y="7.5" width="11" height="1.2" fill="#e8e8e8"/><path d="M3.5 2.5 V5 M7.5 2.5 V5" stroke="#333" stroke-width="0.8"/></svg>
<div class="a" style="left:291px;top:97.70px;width:10px;height:11.5px;background:#2c2c2c;"></div>
<svg class="a" style="left:292px;top:99.20px" width="9" height="9" viewBox="0 0 9 9"><circle cx="4.5" cy="4.5" r="2.2" fill="none" stroke="#6a6a6a" stroke-width="1"/><path d="M4.5 0 V2 M4.5 7 V9 M0 4.5 H2 M7 4.5 H9 M1.3 1.3 L2.6 2.6 M7.7 1.3 L6.4 2.6 M1.3 7.7 L2.6 6.4 M7.7 7.7 L6.4 6.4" stroke="#6a6a6a" stroke-width="1"/></svg>
<div class="a" style="left:302px;top:97.70px;width:11px;height:11.5px;background:#111;"></div>
<svg class="a" style="left:303px;top:98.70px" width="10" height="10" viewBox="0 0 10 10"><path d="M1 9 L9 1" stroke="#e0e0e0" stroke-width="1.1"/></svg>
<svg class="a" style="left:340px;top:97.70px" width="12" height="12" viewBox="0 0 12 12"><g transform="rotate(-45 6 6)"><rect x="0.3" y="2.8" width="11.4" height="6.4" rx="3.2" fill="#7a7a7a" stroke="#d0d0d0" stroke-width="0.9"/><circle cx="8.4" cy="6" r="2.6" fill="#9a9a9a" stroke="#d0d0d0" stroke-width="0.8"/><path d="M3 4 A2.5 2.5 0 0 0 3 8" fill="none" stroke="#d0d0d0" stroke-width="0.7"/></g></svg>
<div class="a" style="left:352px;top:97.70px;width:10px;height:11.5px;background:#111;"></div>
<div class="a" style="left:364.4px;top:97.70px;width:10px;height:11.5px;background:#111;"></div>
<svg class="a" style="left:393px;top:97.70px" width="11" height="12" viewBox="0 0 11 12"><path d="M5.8 6 a0.8 0.8 0 1 1 -1.2 -0.8 a1.8 1.8 0 1 1 -0.5 2.8 a2.8 2.8 0 1 1 4.6 -3.4 a3.8 3.8 0 1 1 -6.2 4.6" fill="none" stroke="#c0c0c0" stroke-width="0.9"/></svg>
<div class="a" style="left:408px;top:97.70px;width:72px;height:11.5px;background:#111;border-radius:2px"></div>
<div class="t" style="left:414.4px;top:99.50px;font-size:8.5px;color:#d8d8d8;width:50px;overflow:hidden">None</div>
<svg class="a" style="left:466px;top:100.20px" width="9" height="6" viewBox="0 0 9 6"><path d="M1 1 L4.5 4.5 L8 1" fill="none" stroke="#e0e0e0" stroke-width="1.3"/></svg>
<div class="a" style="left:497.6px;top:97.20px;width:5.4px;height:12.5px;background:#313131;"></div>
<div class="a" style="left:503px;top:97.20px;width:681px;height:12.5px;background:#313131;"></div>
<div class="a" style="left:656px;top:97.20px;width:157px;height:12.5px;background:#56619c;box-shadow:inset 0 1px 0 rgba(255,255,255,0.25)"></div>
<div class="a" style="left:0px;top:109.60px;width:1184px;height:1.6px;background:#181818;"></div>
<div class="a" style="left:2px;top:111.00px;width:495.6px;height:12.5px;background:#333333;"></div>
<div class="a" style="left:5px;top:111.50px;width:10.5px;height:11.5px;background:#1a1a1a;"></div>
<div class="a" style="left:30px;top:111.50px;width:10px;height:11.5px;background:#111;"></div>
<div class="a" style="left:42px;top:111.50px;width:10px;height:11.5px;background:#111;"></div>
<svg class="a" style="left:60px;top:113.00px" width="6" height="9" viewBox="0 0 6 9"><path d="M1.2 1 L4.5 4.5 L1.2 8" fill="none" stroke="#c8c8c8" stroke-width="1.2"/></svg>
<div class="a" style="left:71px;top:112.20px;width:10px;height:10px;background:#b8b8dc;"></div>
<div class="t" style="left:88px;top:113.40px;font-size:8.5px;color:#c0c0c0;">94</div>
<svg class="a" style="left:114px;top:112.00px" width="8" height="11" viewBox="0 0 8 11"><path d="M0.5 0.5 H5 L7.5 3 V10.5 H0.5 Z" fill="#f0f0f0"/><rect x="1.8" y="4.5" width="4.5" height="1.2" fill="#5b6eb0"/><rect x="1.8" y="6.5" width="4.5" height="1" fill="#8a8a8a"/></svg>
<div class="t" style="left:127.5px;top:113.49px;font-size:8.4px;color:#c8c8c8;max-width:146px;overflow:hidden">Screens...25-11-09 at 6.02.56 PM.png</div>
<div class="a" style="left:278px;top:111.50px;width:12px;height:11.5px;background:#333333;"></div>
<svg class="a" style="left:279px;top:112.00px" width="11" height="10" viewBox="0 0 11 10"><path d="M1.5 5 A4 4 0 0 1 9.5 5 Z" fill="#e8e8e8"/><rect x="4.5" y="5" width="2" height="3" fill="#e8e8e8"/><rect x="0" y="7.5" width="11" height="1.2" fill="#e8e8e8"/><path d="M3.5 2.5 V5 M7.5 2.5 V5" stroke="#333" stroke-width="0.8"/></svg>
<div class="a" style="left:302px;top:111.50px;width:11px;height:11.5px;background:#111;"></div>
<svg class="a" style="left:303px;top:112.50px" width="10" height="10" viewBox="0 0 10 10"><path d="M1 9 L9 1" stroke="#e0e0e0" stroke-width="1.1"/></svg>
<svg class="a" style="left:340px;top:111.50px" width="12" height="12" viewBox="0 0 12 12"><g transform="rotate(-45 6 6)"><rect x="0.3" y="2.8" width="11.4" height="6.4" rx="3.2" fill="#7a7a7a" stroke="#d0d0d0" stroke-width="0.9"/><circle cx="8.4" cy="6" r="2.6" fill="#9a9a9a" stroke="#d0d0d0" stroke-width="0.8"/><path d="M3 4 A2.5 2.5 0 0 0 3 8" fill="none" stroke="#d0d0d0" stroke-width="0.7"/></g></svg>
<div class="a" style="left:352px;top:111.50px;width:10px;height:11.5px;background:#111;"></div>
<div class="a" style="left:364.4px;top:111.50px;width:10px;height:11.5px;background:#111;"></div>
<svg class="a" style="left:393px;top:111.50px" width="11" height="12" viewBox="0 0 11 12"><path d="M5.8 6 a0.8 0.8 0 1 1 -1.2 -0.8 a1.8 1.8 0 1 1 -0.5 2.8 a2.8 2.8 0 1 1 4.6 -3.4 a3.8 3.8 0 1 1 -6.2 4.6" fill="none" stroke="#c0c0c0" stroke-width="0.9"/></svg>
<div class="a" style="left:408px;top:111.50px;width:72px;height:11.5px;background:#111;border-radius:2px"></div>
<div class="t" style="left:414.4px;top:113.30px;font-size:8.5px;color:#d8d8d8;width:50px;overflow:hidden">None</div>
<svg class="a" style="left:466px;top:114.00px" width="9" height="6" viewBox="0 0 9 6"><path d="M1 1 L4.5 4.5 L8 1" fill="none" stroke="#e0e0e0" stroke-width="1.3"/></svg>
<div class="a" style="left:497.6px;top:111.00px;width:5.4px;height:12.5px;background:#313131;"></div>
<div class="a" style="left:503px;top:111.00px;width:681px;height:12.5px;background:#313131;"></div>
<div class="a" style="left:503px;top:111.00px;width:675px;height:12.5px;background:#6e6c80;box-shadow:inset 0 1px 0 rgba(255,255,255,0.25)"></div>
<div class="a" style="left:0px;top:123.40px;width:1184px;height:1.6px;background:#181818;"></div>
<div class="a" style="left:2px;top:124.80px;width:495.6px;height:12.5px;background:#333333;"></div>
<div class="a" style="left:5px;top:125.30px;width:10.5px;height:11.5px;background:#111;"></div>
<svg class="a" style="left:5px;top:127.30px" width="11" height="8" viewBox="0 0 11 8"><path d="M0.8 4 Q5.5 -0.8 10.2 4 Q5.5 8.8 0.8 4 Z" fill="#e8e8e8"/><circle cx="5.5" cy="4" r="1.7" fill="#111"/></svg>
<div class="a" style="left:30px;top:125.30px;width:10px;height:11.5px;background:#111;"></div>
<div class="a" style="left:42px;top:125.30px;width:10px;height:11.5px;background:#111;"></div>
<svg class="a" style="left:60px;top:126.80px" width="6" height="9" viewBox="0 0 6 9"><path d="M1.2 1 L4.5 4.5 L1.2 8" fill="none" stroke="#c8c8c8" stroke-width="1.2"/></svg>
<div class="a" style="left:71px;top:126.00px;width:10px;height:10px;background:#6f86e8;"></div>
<div class="t" style="left:88px;top:127.20px;font-size:8.5px;color:#c0c0c0;">95</div>
<svg class="a" style="left:113px;top:126.30px" width="9" height="9" viewBox="0 0 9 9"><path d="M4.5 0.3 L5.6 3.3 L8.8 3.4 L6.3 5.3 L7.2 8.5 L4.5 6.7 L1.8 8.5 L2.7 5.3 L0.2 3.4 L3.4 3.3 Z" fill="#d8d8d8"/></svg>
<div class="t" style="left:127.5px;top:126.95px;font-size:8.8px;color:#c8c8c8;max-width:146px;overflow:hidden">Email Background Container 2</div>
<div class="a" style="left:278px;top:125.30px;width:12px;height:11.5px;background:#151515;"></div>
<svg class="a" style="left:279px;top:126.80px" width="11" height="9" viewBox="0 0 11 9"><path d="M3 5 A2.5 2.2 0 0 1 8 5 Z" fill="#e0e0e0"/><rect x="0.5" y="5.5" width="10" height="1.2" fill="#e0e0e0"/><rect x="1.5" y="7.6" width="8" height="0.8" fill="#888"/></svg>
<div class="a" style="left:291px;top:125.30px;width:10px;height:11.5px;background:#2c2c2c;"></div>
<svg class="a" style="left:292px;top:126.80px" width="9" height="9" viewBox="0 0 9 9"><circle cx="4.5" cy="4.5" r="2.2" fill="none" stroke="#6a6a6a" stroke-width="1"/><path d="M4.5 0 V2 M4.5 7 V9 M0 4.5 H2 M7 4.5 H9 M1.3 1.3 L2.6 2.6 M7.7 1.3 L6.4 2.6 M1.3 7.7 L2.6 6.4 M7.7 7.7 L6.4 6.4" stroke="#6a6a6a" stroke-width="1"/></svg>
<div class="a" style="left:302px;top:125.30px;width:11px;height:11.5px;background:#111;"></div>
<svg class="a" style="left:303px;top:126.30px" width="10" height="10" viewBox="0 0 10 10"><path d="M1 9 L9 1" stroke="#e0e0e0" stroke-width="1.1"/></svg>
<svg class="a" style="left:340px;top:125.30px" width="12" height="12" viewBox="0 0 12 12"><g transform="rotate(-45 6 6)"><rect x="0.3" y="2.8" width="11.4" height="6.4" rx="3.2" fill="#7a7a7a" stroke="#d0d0d0" stroke-width="0.9"/><circle cx="8.4" cy="6" r="2.6" fill="#9a9a9a" stroke="#d0d0d0" stroke-width="0.8"/><path d="M3 4 A2.5 2.5 0 0 0 3 8" fill="none" stroke="#d0d0d0" stroke-width="0.7"/></g></svg>
<div class="a" style="left:352px;top:125.30px;width:10px;height:11.5px;background:#111;"></div>
<div class="a" style="left:364.4px;top:125.30px;width:10px;height:11.5px;background:#111;"></div>
<svg class="a" style="left:393px;top:125.30px" width="11" height="12" viewBox="0 0 11 12"><path d="M5.8 6 a0.8 0.8 0 1 1 -1.2 -0.8 a1.8 1.8 0 1 1 -0.5 2.8 a2.8 2.8 0 1 1 4.6 -3.4 a3.8 3.8 0 1 1 -6.2 4.6" fill="none" stroke="#c0c0c0" stroke-width="0.9"/></svg>
<div class="a" style="left:408px;top:125.30px;width:72px;height:11.5px;background:#111;border-radius:2px"></div>
<div class="t" style="left:414.4px;top:127.10px;font-size:8.5px;color:#d8d8d8;width:50px;overflow:hidden">92. Blue Op</div>
<svg class="a" style="left:466px;top:127.80px" width="9" height="6" viewBox="0 0 9 6"><path d="M1 1 L4.5 4.5 L8 1" fill="none" stroke="#e0e0e0" stroke-width="1.3"/></svg>
<div class="a" style="left:497.6px;top:124.80px;width:5.4px;height:12.5px;background:#313131;"></div>
<div class="a" style="left:503px;top:124.80px;width:681px;height:12.5px;background:#313131;"></div>
<div class="a" style="left:653px;top:124.80px;width:3px;height:12.5px;background:#56619c;box-shadow:inset 0 1px 0 rgba(255,255,255,0.25)"></div>
<div class="a" style="left:0px;top:137.20px;width:1184px;height:1.6px;background:#181818;"></div>
<div class="a" style="left:2px;top:138.60px;width:495.6px;height:12.5px;background:#4a4a4a;"></div>
<div class="a" style="left:5px;top:139.10px;width:10.5px;height:11.5px;background:#111;"></div>
<svg class="a" style="left:5px;top:141.10px" width="11" height="8" viewBox="0 0 11 8"><path d="M0.8 4 Q5.5 -0.8 10.2 4 Q5.5 8.8 0.8 4 Z" fill="#e8e8e8"/><circle cx="5.5" cy="4" r="1.7" fill="#111"/></svg>
<div class="a" style="left:30px;top:139.10px;width:10px;height:11.5px;background:#111;"></div>
<div class="a" style="left:42px;top:139.10px;width:10px;height:11.5px;background:#111;"></div>
<svg class="a" style="left:60px;top:140.60px" width="6" height="9" viewBox="0 0 6 9"><path d="M1.2 1 L4.5 4.5 L1.2 8" fill="none" stroke="#c8c8c8" stroke-width="1.2"/></svg>
<div class="a" style="left:71px;top:139.80px;width:10px;height:10px;background:#6f86e8;"></div>
<div class="t" style="left:88px;top:141.00px;font-size:8.5px;color:#c8c8c8;">96</div>
<svg class="a" style="left:113px;top:140.10px" width="9" height="9" viewBox="0 0 9 9"><path d="M4.5 0.3 L5.6 3.3 L8.8 3.4 L6.3 5.3 L7.2 8.5 L4.5 6.7 L1.8 8.5 L2.7 5.3 L0.2 3.4 L3.4 3.3 Z" fill="#d8d8d8"/></svg>
<div class="a" style="left:125px;top:138.60px;width:149.5px;height:12.5px;background:#c4c4c4;"></div>
<div class="t" style="left:127.5px;top:140.75px;font-size:8.8px;color:#242424;max-width:146px;overflow:hidden">Shape Layer 16</div>
<div class="a" style="left:278px;top:139.10px;width:12px;height:11.5px;background:#151515;"></div>
<svg class="a" style="left:279px;top:140.60px" width="11" height="9" viewBox="0 0 11 9"><path d="M3 5 A2.5 2.2 0 0 1 8 5 Z" fill="#e0e0e0"/><rect x="0.5" y="5.5" width="10" height="1.2" fill="#e0e0e0"/><rect x="1.5" y="7.6" width="8" height="0.8" fill="#888"/></svg>
<div class="a" style="left:291px;top:139.10px;width:10px;height:11.5px;background:#3a3a3a;"></div>
<svg class="a" style="left:292px;top:140.60px" width="9" height="9" viewBox="0 0 9 9"><circle cx="4.5" cy="4.5" r="2.2" fill="none" stroke="#6a6a6a" stroke-width="1"/><path d="M4.5 0 V2 M4.5 7 V9 M0 4.5 H2 M7 4.5 H9 M1.3 1.3 L2.6 2.6 M7.7 1.3 L6.4 2.6 M1.3 7.7 L2.6 6.4 M7.7 7.7 L6.4 6.4" stroke="#6a6a6a" stroke-width="1"/></svg>
<div class="a" style="left:302px;top:139.10px;width:11px;height:11.5px;background:#111;"></div>
<svg class="a" style="left:303px;top:140.10px" width="10" height="10" viewBox="0 0 10 10"><path d="M1 9 L9 1" stroke="#e0e0e0" stroke-width="1.1"/></svg>
<svg class="a" style="left:340px;top:139.10px" width="12" height="12" viewBox="0 0 12 12"><g transform="rotate(-45 6 6)"><rect x="0.3" y="2.8" width="11.4" height="6.4" rx="3.2" fill="#7a7a7a" stroke="#d0d0d0" stroke-width="0.9"/><circle cx="8.4" cy="6" r="2.6" fill="#9a9a9a" stroke="#d0d0d0" stroke-width="0.8"/><path d="M3 4 A2.5 2.5 0 0 0 3 8" fill="none" stroke="#d0d0d0" stroke-width="0.7"/></g></svg>
<div class="a" style="left:352px;top:139.10px;width:10px;height:11.5px;background:#111;"></div>
<div class="a" style="left:364.4px;top:139.10px;width:10px;height:11.5px;background:#111;"></div>
<svg class="a" style="left:393px;top:139.10px" width="11" height="12" viewBox="0 0 11 12"><path d="M5.8 6 a0.8 0.8 0 1 1 -1.2 -0.8 a1.8 1.8 0 1 1 -0.5 2.8 a2.8 2.8 0 1 1 4.6 -3.4 a3.8 3.8 0 1 1 -6.2 4.6" fill="none" stroke="#c0c0c0" stroke-width="0.9"/></svg>
<div class="a" style="left:408px;top:139.10px;width:72px;height:11.5px;background:#111;border-radius:2px"></div>
<div class="t" style="left:414.4px;top:140.90px;font-size:8.5px;color:#d8d8d8;width:50px;overflow:hidden">None</div>
<svg class="a" style="left:466px;top:141.60px" width="9" height="6" viewBox="0 0 9 6"><path d="M1 1 L4.5 4.5 L8 1" fill="none" stroke="#e0e0e0" stroke-width="1.3"/></svg>
<div class="a" style="left:497.6px;top:138.60px;width:5.4px;height:12.5px;background:#4c4c4c;"></div>
<div class="a" style="left:503px;top:138.60px;width:681px;height:12.5px;background:#4c4c4c;"></div>
<div class="a" style="left:503px;top:138.60px;width:632px;height:12.5px;background:#5a6fd8;box-shadow:inset 0 1px 0 rgba(255,255,255,0.25)"></div>
<div class="a" style="left:0px;top:151.00px;width:1184px;height:1.6px;background:#181818;"></div>
<div class="a" style="left:2px;top:152.40px;width:495.6px;height:12.5px;background:#4a4a4a;"></div>
<div class="a" style="left:5px;top:152.90px;width:10.5px;height:11.5px;background:#111;"></div>
<svg class="a" style="left:5px;top:154.90px" width="11" height="8" viewBox="0 0 11 8"><path d="M0.8 4 Q5.5 -0.8 10.2 4 Q5.5 8.8 0.8 4 Z" fill="#e8e8e8"/><circle cx="5.5" cy="4" r="1.7" fill="#111"/></svg>
<div class="a" style="left:30px;top:152.90px;width:10px;height:11.5px;background:#111;"></div>
<div class="a" style="left:42px;top:152.90px;width:10px;height:11.5px;background:#111;"></div>
<svg class="a" style="left:60px;top:154.40px" width="6" height="9" viewBox="0 0 6 9"><path d="M1.2 1 L4.5 4.5 L1.2 8" fill="none" stroke="#c8c8c8" stroke-width="1.2"/></svg>
<div class="a" style="left:71px;top:153.60px;width:10px;height:10px;background:#6f86e8;"></div>
<div class="t" style="left:88px;top:154.80px;font-size:8.5px;color:#c8c8c8;">97</div>
<svg class="a" style="left:113px;top:153.90px" width="9" height="9" viewBox="0 0 9 9"><path d="M4.5 0.3 L5.6 3.3 L8.8 3.4 L6.3 5.3 L7.2 8.5 L4.5 6.7 L1.8 8.5 L2.7 5.3 L0.2 3.4 L3.4 3.3 Z" fill="#d8d8d8"/></svg>
<div class="a" style="left:125px;top:152.40px;width:149.5px;height:12.5px;background:#c4c4c4;"></div>
<div class="t" style="left:127.5px;top:154.55px;font-size:8.8px;color:#242424;max-width:146px;overflow:hidden">Shape Layer 15</div>
<div class="a" style="left:278px;top:152.90px;width:12px;height:11.5px;background:#151515;"></div>
<svg class="a" style="left:279px;top:154.40px" width="11" height="9" viewBox="0 0 11 9"><path d="M3 5 A2.5 2.2 0 0 1 8 5 Z" fill="#e0e0e0"/><rect x="0.5" y="5.5" width="10" height="1.2" fill="#e0e0e0"/><rect x="1.5" y="7.6" width="8" height="0.8" fill="#888"/></svg>
<div class="a" style="left:291px;top:152.90px;width:10px;height:11.5px;background:#3a3a3a;"></div>
<svg class="a" style="left:292px;top:154.40px" width="9" height="9" viewBox="0 0 9 9"><circle cx="4.5" cy="4.5" r="2.2" fill="none" stroke="#6a6a6a" stroke-width="1"/><path d="M4.5 0 V2 M4.5 7 V9 M0 4.5 H2 M7 4.5 H9 M1.3 1.3 L2.6 2.6 M7.7 1.3 L6.4 2.6 M1.3 7.7 L2.6 6.4 M7.7 7.7 L6.4 6.4" stroke="#6a6a6a" stroke-width="1"/></svg>
<div class="a" style="left:302px;top:152.90px;width:11px;height:11.5px;background:#111;"></div>
<svg class="a" style="left:303px;top:153.90px" width="10" height="10" viewBox="0 0 10 10"><path d="M1 9 L9 1" stroke="#e0e0e0" stroke-width="1.1"/></svg>
<svg class="a" style="left:340px;top:152.90px" width="12" height="12" viewBox="0 0 12 12"><g transform="rotate(-45 6 6)"><rect x="0.3" y="2.8" width="11.4" height="6.4" rx="3.2" fill="#7a7a7a" stroke="#d0d0d0" stroke-width="0.9"/><circle cx="8.4" cy="6" r="2.6" fill="#9a9a9a" stroke="#d0d0d0" stroke-width="0.8"/><path d="M3 4 A2.5 2.5 0 0 0 3 8" fill="none" stroke="#d0d0d0" stroke-width="0.7"/></g></svg>
<div class="a" style="left:352px;top:152.90px;width:10px;height:11.5px;background:#111;"></div>
<div class="a" style="left:364.4px;top:152.90px;width:10px;height:11.5px;background:#111;"></div>
<svg class="a" style="left:393px;top:152.90px" width="11" height="12" viewBox="0 0 11 12"><path d="M5.8 6 a0.8 0.8 0 1 1 -1.2 -0.8 a1.8 1.8 0 1 1 -0.5 2.8 a2.8 2.8 0 1 1 4.6 -3.4 a3.8 3.8 0 1 1 -6.2 4.6" fill="none" stroke="#c0c0c0" stroke-width="0.9"/></svg>
<div class="a" style="left:408px;top:152.90px;width:72px;height:11.5px;background:#111;border-radius:2px"></div>
<div class="t" style="left:414.4px;top:154.70px;font-size:8.5px;color:#d8d8d8;width:50px;overflow:hidden">None</div>
<svg class="a" style="left:466px;top:155.40px" width="9" height="6" viewBox="0 0 9 6"><path d="M1 1 L4.5 4.5 L8 1" fill="none" stroke="#e0e0e0" stroke-width="1.3"/></svg>
<div class="a" style="left:497.6px;top:152.40px;width:5.4px;height:12.5px;background:#4c4c4c;"></div>
<div class="a" style="left:503px;top:152.40px;width:681px;height:12.5px;background:#4c4c4c;"></div>
<div class="a" style="left:503px;top:152.40px;width:632px;height:12.5px;background:#5a6fd8;box-shadow:inset 0 1px 0 rgba(255,255,255,0.25)"></div>
<div class="a" style="left:0px;top:164.80px;width:1184px;height:2px;background:#181818;"></div>
<div class="a" style="left:497px;top:0.00px;width:1px;height:163px;background:#151515;"></div>
<div class="a" style="left:633.5px;top:0.00px;width:1.5px;height:163px;background:rgba(110,150,220,0.85);"></div>
</div>
<div class="a" style="left:1184px;top:509px;width:16px;height:180px;background:#1c1c1c;"></div>
<svg class="a" style="left:1187px;top:512px;" width="11" height="12" viewBox="0 0 11 12"><path d="M0.5 0.5 H10.5 V7 L5.5 11 L0.5 7 Z" fill="#cfcfcf"/></svg>
<svg class="a" style="left:1184px;top:529px;" width="14" height="11" viewBox="0 0 14 11"><path d="M5 1 H13 V9 H5 L1 5 Z" fill="none" stroke="#d0d0d0" stroke-width="1"/><circle cx="4.5" cy="7" r="3" fill="#1c1c1c" stroke="#d0d0d0" stroke-width="1"/></svg>
<div class="a" style="left:1188px;top:623px;width:8px;height:14px;background:#4a4a4a;border-radius:3px"></div>
<div class="a" style="left:497px;top:482px;width:687px;height:27px;background:#1f1f1f;"></div>
<div class="a" style="left:503px;top:487px;width:678px;height:6px;background:#6a6a6a;"></div>
<div class="a" style="left:499px;top:486.5px;width:6px;height:7px;background:#4d90f0;border-radius:3px 0 0 3px"></div>
<div class="a" style="left:1179px;top:486.5px;width:5px;height:7px;background:#4d90f0;border-radius:0 3px 3px 0"></div>
<div class="a" style="left:504px;top:506px;width:1px;height:7px;background:#a8a8a8;"></div>
<div class="t" style="left:497.5px;top:496.20px;font-size:8.5px;color:#c8c8c8;font-weight:normal;">:00s</div>
<div class="a" style="left:548px;top:506px;width:1px;height:7px;background:#a8a8a8;"></div>
<div class="t" style="left:548.47px;top:496.20px;font-size:8.5px;color:#c8c8c8;font-weight:normal;transform:translateX(-50%);">02s</div>
<div class="a" style="left:593px;top:506px;width:1px;height:7px;background:#a8a8a8;"></div>
<div class="t" style="left:593.34px;top:496.20px;font-size:8.5px;color:#c8c8c8;font-weight:normal;transform:translateX(-50%);">04s</div>
<div class="a" style="left:638px;top:506px;width:1px;height:7px;background:#a8a8a8;"></div>
<div class="t" style="left:638.21px;top:496.20px;font-size:8.5px;color:#c8c8c8;font-weight:normal;transform:translateX(-50%);">06s</div>
<div class="a" style="left:683px;top:506px;width:1px;height:7px;background:#a8a8a8;"></div>
<div class="t" style="left:683.08px;top:496.20px;font-size:8.5px;color:#c8c8c8;font-weight:normal;transform:translateX(-50%);">08s</div>
<div class="a" style="left:728px;top:506px;width:1px;height:7px;background:#a8a8a8;"></div>
<div class="t" style="left:727.95px;top:496.20px;font-size:8.5px;color:#c8c8c8;font-weight:normal;transform:translateX(-50%);">10s</div>
<div class="a" style="left:773px;top:506px;width:1px;height:7px;background:#a8a8a8;"></div>
<div class="t" style="left:772.8199999999999px;top:496.20px;font-size:8.5px;color:#c8c8c8;font-weight:normal;transform:translateX(-50%);">12s</div>
<div class="a" style="left:818px;top:506px;width:1px;height:7px;background:#a8a8a8;"></div>
<div class="t" style="left:817.69px;top:496.20px;font-size:8.5px;color:#c8c8c8;font-weight:normal;transform:translateX(-50%);">14s</div>
<div class="a" style="left:863px;top:506px;width:1px;height:7px;background:#a8a8a8;"></div>
<div class="t" style="left:862.56px;top:496.20px;font-size:8.5px;color:#c8c8c8;font-weight:normal;transform:translateX(-50%);">16s</div>
<div class="a" style="left:907px;top:506px;width:1px;height:7px;background:#a8a8a8;"></div>
<div class="t" style="left:907.4300000000001px;top:496.20px;font-size:8.5px;color:#c8c8c8;font-weight:normal;transform:translateX(-50%);">18s</div>
<div class="a" style="left:952px;top:506px;width:1px;height:7px;background:#a8a8a8;"></div>
<div class="t" style="left:952.3px;top:496.20px;font-size:8.5px;color:#c8c8c8;font-weight:normal;transform:translateX(-50%);">20s</div>
<div class="a" style="left:997px;top:506px;width:1px;height:7px;background:#a8a8a8;"></div>
<div class="t" style="left:997.1700000000001px;top:496.20px;font-size:8.5px;color:#c8c8c8;font-weight:normal;transform:translateX(-50%);">22s</div>
<div class="a" style="left:1042px;top:506px;width:1px;height:7px;background:#a8a8a8;"></div>
<div class="t" style="left:1042.04px;top:496.20px;font-size:8.5px;color:#c8c8c8;font-weight:normal;transform:translateX(-50%);">24s</div>
<div class="a" style="left:1087px;top:506px;width:1px;height:7px;background:#a8a8a8;"></div>
<div class="t" style="left:1086.9099999999999px;top:496.20px;font-size:8.5px;color:#c8c8c8;font-weight:normal;transform:translateX(-50%);">26s</div>
<div class="a" style="left:1132px;top:506px;width:1px;height:7px;background:#a8a8a8;"></div>
<div class="t" style="left:1131.78px;top:496.20px;font-size:8.5px;color:#c8c8c8;font-weight:normal;transform:translateX(-50%);">28s</div>
<div class="a" style="left:1177px;top:506px;width:1px;height:7px;background:#a8a8a8;"></div>
<div class="t" style="left:1169.5px;top:496.20px;font-size:8.5px;color:#c8c8c8;font-weight:normal;">30s</div>
<div class="a" style="left:503px;top:510px;width:520px;height:12px;background:#6a6a6a;"></div>
<div class="a" style="left:1023px;top:510px;width:161px;height:12px;background:#1f1f1f;"></div>
<div class="a" style="left:499px;top:510px;width:5px;height:12px;background:#4d90f0;border-radius:3px 0 0 3px"></div>
<div class="a" style="left:1022px;top:510px;width:5px;height:12px;background:#4d90f0;border-radius:0 3px 3px 0"></div>
<div class="a" style="left:503px;top:522.5px;width:519px;height:3px;background:#29c43a;"></div>
<div class="a" style="left:1029px;top:523px;width:10px;height:2.5px;background:#29c43a;"></div>
<svg class="a" style="left:628.5px;top:497px;" width="11" height="13" viewBox="0 0 11 13"><path d="M0.5 0.5 H10.5 V7 L5.5 12 L0.5 7 Z" fill="#5a9af0"/></svg>
<div class="a" style="left:633.5px;top:505px;width:1.5px;height:21px;background:rgba(110,150,220,0.85);"></div>
<div class="a" style="left:0px;top:689px;width:1200px;height:15px;background:#1f1f1f;"></div>
<div class="a" style="left:4px;top:689px;width:14px;height:13px;background:#3a3a3a;border-radius:2px"></div>
<svg class="a" style="left:6px;top:691px;" width="10" height="10" viewBox="0 0 10 10"><rect x="0.5" y="0.5" width="6" height="6" fill="none" stroke="#cfcfcf" stroke-width="1"/><rect x="3.5" y="3.5" width="6" height="6" fill="#3a3a3a" stroke="#cfcfcf" stroke-width="1"/></svg>
<svg class="a" style="left:22px;top:691px;" width="10" height="10" viewBox="0 0 10 10"><circle cx="4" cy="4" r="3.3" fill="none" stroke="#cfcfcf" stroke-width="1"/><rect x="4" y="4" width="5.5" height="5.5" fill="#1f1f1f" stroke="#cfcfcf" stroke-width="1"/></svg>
<div class="t" style="left:36.5px;top:691.53px;font-size:10px;color:#cfcfcf;font-weight:normal;letter-spacing:1px">{}</div>
<svg class="a" style="left:52px;top:691px;" width="11" height="10" viewBox="0 0 11 10"><circle cx="4" cy="4.5" r="3.5" fill="#cfcfcf"/><path d="M0 9.5 H8" stroke="#cfcfcf" stroke-width="1"/><path d="M8 2 H10.5 L8 7 H10.5" fill="none" stroke="#cfcfcf" stroke-width="0.9"/></svg>
<div class="t" style="left:86px;top:691.58px;font-size:9px;color:#c4c4c4;font-weight:normal;">Frame Render Time:</div>
<div class="t" style="left:171.7px;top:691.58px;font-size:9px;color:#5fd49a;font-weight:normal;">22ms</div>
<div class="t" style="left:283px;top:691.58px;font-size:9px;color:#c8c8c8;font-weight:normal;">Toggle Switches / Modes</div>
<svg class="a" style="left:502px;top:692px;" width="10" height="6" viewBox="0 0 10 6"><path d="M0.5 5.5 L5 0.8 L9.5 5.5 Z" fill="#cfcfcf"/></svg>
<svg class="a" style="left:516px;top:691px;" width="10" height="10" viewBox="0 0 10 10"><circle cx="5" cy="5" r="3.8" fill="none" stroke="#d0d0d0" stroke-width="1.4"/></svg>
<div class="a" style="left:525px;top:695.5px;width:40px;height:1px;background:#5a5a5a;"></div>
<svg class="a" style="left:568px;top:690px;" width="14" height="9" viewBox="0 0 14 9"><path d="M0.5 8.5 L5 3 L7 5 L9.5 1 L13.5 8.5 Z" fill="#cfcfcf"/></svg>
</body></html>
